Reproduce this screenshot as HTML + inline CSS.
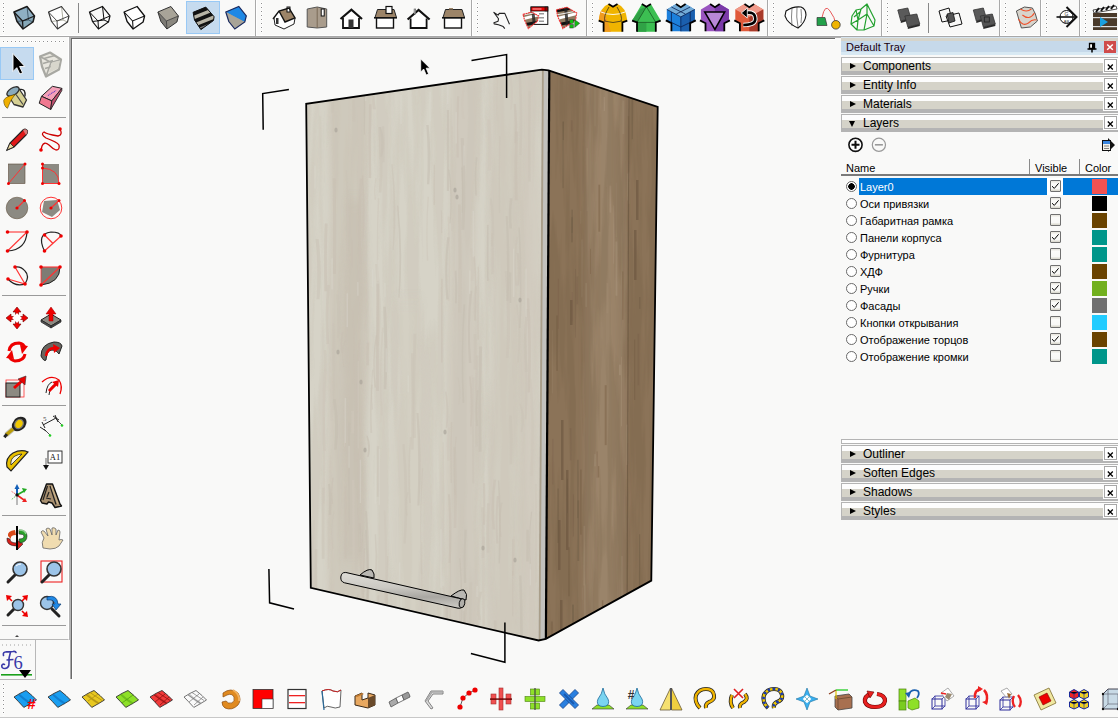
<!DOCTYPE html>
<html><head><meta charset="utf-8">
<style>
*{margin:0;padding:0;box-sizing:border-box}
html,body{width:1118px;height:718px;overflow:hidden;background:#f9f9f8;font-family:"Liberation Sans",sans-serif;position:relative}
.a{position:absolute}
.vsep{position:absolute;top:0;height:36px;width:1px;background:#a9a9a9;box-shadow:1px 0 0 #fff}
.grip{position:absolute;width:3px;background-image:radial-gradient(circle at 1.5px 1.5px,#8f8f8f 0.75px,rgba(255,255,255,0.9) 1px,transparent 1.6px);background-size:4px 4px}
.panel{position:absolute;left:841px;width:277px;height:18px;border-top:1px solid #b4b4b4;border-left:1px solid #b4b4b4;background:linear-gradient(#fdfdfd 0 5px,#d5d3c9 5px 13px,#b4b4b4 13px 17px,#f9f9f8 17px)}
.panel .t{position:absolute;left:21px;top:1px;font-size:12px;color:#000;line-height:14px}
.panel .tri{position:absolute;left:8px;top:5px;width:0;height:0;border-left:6px solid #000;border-top:3.5px solid transparent;border-bottom:3.5px solid transparent}
.panel .x{position:absolute;left:262px;top:1px;width:13px;height:13px;border:1px solid #a8a8a8;background:#fff}
.row{position:absolute;left:841px;width:277px;height:17px;font-size:11px}
.row .n{position:absolute;left:19px;top:3px;line-height:13px}
.rad{position:absolute;left:5px;top:3px;width:11px;height:11px;border-radius:50%;border:1px solid #6a6a6a;background:#fff}
.cb{position:absolute;left:209px;top:2px;width:11px;height:12px;border:1px solid #707070;border-radius:1px;background:linear-gradient(#e6e4dc,#fbfbf9 25%,#f8f8f6 75%,#d6d4c8)}
.sw{position:absolute;left:251px;top:1px;width:15px;height:15px}
</style></head><body>
<!-- top toolbar -->
<div class="a" style="left:0;top:35px;width:1118px;height:1px;background:#fff"></div>
<div class="a" style="left:0;top:36px;width:1118px;height:1px;background:#a8a8a8"></div>
<div class="grip" style="left:2px;top:2px;height:33px"></div>
<div class="vsep" style="left:255px"></div><div class="grip" style="left:260px;top:2px;height:33px"></div>
<div class="vsep" style="left:471px"></div><div class="grip" style="left:476px;top:2px;height:33px"></div>
<div class="vsep" style="left:586px"></div><div class="grip" style="left:591px;top:2px;height:33px"></div>
<div class="vsep" style="left:767px"></div><div class="grip" style="left:772px;top:2px;height:33px"></div>
<div class="vsep" style="left:881px"></div><div class="grip" style="left:886px;top:2px;height:33px"></div>
<div class="vsep" style="left:999px"></div><div class="grip" style="left:1004px;top:2px;height:33px"></div>
<div class="vsep" style="left:1040px"></div><div class="grip" style="left:1045px;top:2px;height:33px"></div>
<div class="vsep" style="left:1079px"></div><div class="grip" style="left:1084px;top:2px;height:33px"></div>
<div class="a" style="left:78px;top:3px;width:1px;height:30px;background:#888"></div>
<div class="a" style="left:928px;top:3px;width:1px;height:30px;background:#888"></div>
<!-- highlight top -->
<div class="a" style="left:186px;top:1px;width:34px;height:33px;background:#c6dbef;border:1px solid #99c9f5"></div>

<!--TOP--><svg class="a" style="left:0;top:0" width="1118" height="40"><g transform="translate(24.5,17)"><polygon points="-10.5,-5 2.5,-10.5 10,-1 -2,4" fill="#8fb0c4"/><polygon points="-10.5,-5 -2,4 -1.5,12 -7.5,4.5" fill="#7f9aab"/><polygon points="-2,4 10,-1 8.5,5 -1.5,12" fill="#86a8b8"/><polyline points="-7.5,4.5 4,3 8.5,5" fill="none" stroke="#3d5666" stroke-width="0.9"/><line x1="2.5" y1="-10.5" x2="4" y2="3" stroke="#3d5666" stroke-width="0.9"/><polygon points="-10.5,-5 2.5,-10.5 10,-1 8.5,5 -1.5,12 -7.5,4.5" fill="none" stroke="#1a1a1a" stroke-width="1.5" stroke-linejoin="round"/><polyline points="-10.5,-5 -2,4 10,-1" fill="none" stroke="#1a1a1a" stroke-width="1.2000000000000002"/><line x1="-2" y1="4" x2="-1.5" y2="12" stroke="#1a1a1a" stroke-width="1.2000000000000002"/></g><g transform="translate(59,17)"><polygon points="-10.5,-5 2.5,-10.5 10,-1 -2,4" fill="#fff"/><polygon points="-10.5,-5 -2,4 -1.5,12 -7.5,4.5" fill="#fff"/><polygon points="-2,4 10,-1 8.5,5 -1.5,12" fill="#fff"/><polyline points="-7.5,4.5 4,3 8.5,5" fill="none" stroke="#9a9a8a" stroke-width="0.8"/><line x1="2.5" y1="-10.5" x2="4" y2="3" stroke="#9a9a8a" stroke-width="0.8"/><polygon points="-10.5,-5 2.5,-10.5 10,-1 8.5,5 -1.5,12 -7.5,4.5" fill="none" stroke="#333" stroke-width="1.1" stroke-linejoin="round"/><polyline points="-10.5,-5 -2,4 10,-1" fill="none" stroke="#333" stroke-width="0.8800000000000001"/><line x1="-2" y1="4" x2="-1.5" y2="12" stroke="#333" stroke-width="0.8800000000000001"/></g><g transform="translate(100,17)"><polygon points="-10.5,-5 2.5,-10.5 10,-1 8.5,5 -1.5,12 -7.5,4.5" fill="none" stroke="#111" stroke-width="1.2"/><polyline points="-10.5,-5 -2,4 10,-1" fill="none" stroke="#111" stroke-width="1"/><line x1="-2" y1="4" x2="-1.5" y2="12" stroke="#111" stroke-width="1"/><polyline points="-7.5,4.5 4,3 8.5,5" fill="none" stroke="#111" stroke-width="1"/><line x1="2.5" y1="-10.5" x2="4" y2="3" stroke="#111" stroke-width="1"/></g><g transform="translate(134.6,17)"><polygon points="-10.5,-5 2.5,-10.5 10,-1 -2,4" fill="#fff"/><polygon points="-10.5,-5 -2,4 -1.5,12 -7.5,4.5" fill="#fff"/><polygon points="-2,4 10,-1 8.5,5 -1.5,12" fill="#fff"/><polygon points="-10.5,-5 2.5,-10.5 10,-1 8.5,5 -1.5,12 -7.5,4.5" fill="none" stroke="#111" stroke-width="1.3" stroke-linejoin="round"/><polyline points="-10.5,-5 -2,4 10,-1" fill="none" stroke="#111" stroke-width="1.04"/><line x1="-2" y1="4" x2="-1.5" y2="12" stroke="#111" stroke-width="1.04"/></g><g transform="translate(168.4,17)"><polygon points="-10.5,-5 2.5,-10.5 10,-1 -2,4" fill="#a8a498"/><polygon points="-10.5,-5 -2,4 -1.5,12 -7.5,4.5" fill="#7c7a74"/><polygon points="-2,4 10,-1 8.5,5 -1.5,12" fill="#8a877f"/><polygon points="-10.5,-5 2.5,-10.5 10,-1 8.5,5 -1.5,12 -7.5,4.5" fill="none" stroke="#333" stroke-width="1" stroke-linejoin="round"/><polyline points="-10.5,-5 -2,4 10,-1" fill="none" stroke="#333" stroke-width="0.8"/><line x1="-2" y1="4" x2="-1.5" y2="12" stroke="#333" stroke-width="0.8"/></g><g transform="translate(203,17)"><clipPath id="c6"><polygon points="-9.9,-4.7 2.8,-9.9 11.1,-0.3 10.5,3.5 -2.1,12.6 -8.5,3"/></clipPath><g clip-path="url(#c6)"><rect x="-15" y="-15" width="30" height="30" fill="#111"/><g transform="rotate(-22)"><rect x="-15" y="-4.6" width="30" height="3.4" fill="#b8b4a6"/><rect x="-15" y="2.4" width="30" height="3.4" fill="#b8b4a6"/><rect x="-15" y="8.4" width="30" height="1.4" fill="#777"/></g></g><polygon points="-9.9,-4.7 2.8,-9.9 11.1,-0.3 10.5,3.5 -2.1,12.6 -8.5,3" fill="none" stroke="#111" stroke-width="1"/></g><g transform="translate(236.3,17)"><polygon points="-10.5,-5 2.5,-10.5 10,-1 8.5,5 -1.5,12 -7.5,4.5" fill="#9b968a"/><polygon points="-10.5,-5 2.5,-10.5 10,-1 8.5,5" fill="#1e88e5"/><polygon points="-10.5,-5 8.5,5 -1.5,12 -7.5,4.5" fill="#a8a498"/><polygon points="-10.5,-5 2.5,-10.5 10,-1 8.5,5 -1.5,12 -7.5,4.5" fill="none" stroke="#1a2a60" stroke-width="1.2"/></g><g transform="translate(283,17)"><polygon points="-4,-6 6,-9 12,1 2,5" fill="#9c8468"/><polygon points="-9,1 -4,-6 2,5 1,12 -8,8" fill="#fff"/><polygon points="2,5 12,1 11,7 1,12" fill="#fff"/><rect x="-7" y="1" width="2.5" height="6" fill="#333"/><rect x="4" y="-10" width="3" height="5" fill="#fff" stroke="#111" stroke-width="1"/><polyline points="-10,2 -4,-6 6,-9 12,1 2,5 -4,-6" fill="none" stroke="#111" stroke-width="1.4"/><polyline points="-9,1 -8,8 1,12 11,7 12,1" fill="none" stroke="#222" stroke-width="1"/></g><g transform="translate(316.7,17)"><polygon points="-9.5,-8 0.5,-10 10,-8 10,10 0.5,11 -9.5,10" fill="#a99c8c" stroke="#555" stroke-width="1"/><line x1="0.5" y1="-10" x2="0.5" y2="11" stroke="#7a6a58" stroke-width="1"/><rect x="4.5" y="-8" width="3" height="7" fill="#fff" stroke="#111" stroke-width="1"/></g><g transform="translate(351,17)"><polygon points="-8,1 0.4,-7 8.5,1 8,11 -8,11" fill="#fff"/><polyline points="-10.5,2 0.4,-7.3 11,2" fill="none" stroke="#111" stroke-width="2.2"/><polyline points="-8,1 -8,11 8,11 8,1" fill="none" stroke="#111" stroke-width="1.8"/><rect x="-2.5" y="2.5" width="5" height="8.5" fill="#333"/></g><g transform="translate(385,17)"><polygon points="-10,0.5 -7.5,-7.5 9,-7.5 11.5,0.5" fill="#9c8468" stroke="#222" stroke-width="1"/><rect x="-11" y="0" width="23" height="1.6" fill="#111"/><rect x="-8.5" y="1" width="17" height="10" fill="#fff" stroke="#111" stroke-width="1.4"/><rect x="1" y="-10.5" width="6" height="7" fill="#fff" stroke="#111" stroke-width="1.2"/></g><g transform="translate(418.6,17)"><polygon points="-9,2 0,-6.5 9,2 9,11 -9,11" fill="#fff"/><polyline points="-11,2.5 0,-7 11,2.5" fill="none" stroke="#111" stroke-width="2.2"/><polyline points="-8,1.5 -8,11 8,11 8,1.5" fill="none" stroke="#111" stroke-width="1.8"/><rect x="-4.5" y="-8" width="1.6" height="5" fill="#ccc" stroke="#555" stroke-width="0.6"/></g><g transform="translate(453,17)"><polygon points="-10,0.5 -7.5,-7.5 9,-7.5 11.5,0.5" fill="#9c8468" stroke="#222" stroke-width="1"/><rect x="-11" y="0" width="23" height="1.6" fill="#111"/><rect x="-8.5" y="1" width="17" height="10" fill="#fff" stroke="#111" stroke-width="1.4"/><rect x="-4" y="-9" width="4" height="1.5" fill="#9c8468"/></g><g transform="translate(501,17)"><path d="M8.5,7.3 L3.8,-3.6 L-1.7,-3.6 L-2.9,-1.9 L-7.1,-4.6 L-2.5,1.8 L-2.9,4.2 L-7.1,5.7 L-6.8,6.9 L-2.5,7.7 L2.2,9.6 L3.8,11.6" fill="none" stroke="#222" stroke-width="1.1" stroke-linejoin="round"/></g><g transform="translate(536,17)"><rect x="-5" y="-10" width="16.8" height="17.4" fill="#fff" stroke="#111" stroke-width="1"/><rect x="-5" y="-10" width="16.8" height="4" fill="#e00" stroke="#111" stroke-width="0.8"/><rect x="-3.5" y="-8.6" width="9" height="1.2" fill="#fff" opacity="0.6"/><rect x="9" y="-10" width="2.8" height="4" fill="#900" stroke="#111" stroke-width="0.6"/><rect x="3" y="-4" width="5" height="1.5" fill="#999"/><rect x="3" y="0" width="5" height="1.5" fill="#999"/><rect x="3" y="3.5" width="5" height="1.5" fill="#999"/><clipPath id="cA"><polygon points="-13,-2.6 -4.4,-5 2.7,-1.1 1.5,4 -7.7,11.6 -11.5,3"/></clipPath><g clip-path="url(#cA)"><polygon points="-13,-2.6 -4.4,-5 2.7,-1.1 1.5,4 -7.7,11.6 -11.5,3" fill="#8f7a60"/><path d="M-20,-6 L20,-14 L20,-11 L-20,-3 Z" fill="#111"/><path d="M-20,2 L20,-8 L20,-5 L-20,5 Z" fill="#fff"/><path d="M-20,8 L20,0 L20,3 L-20,11 Z" fill="#111"/><path d="M-6,-20 L-2,20 L1,20 L-3,-20 Z" fill="#222" opacity="0.8"/><path d="M-20,-1 L20,-9 L20,-8 L-20,0 Z" fill="#eee"/></g><polygon points="-13,-2.6 -4.4,-5 2.7,-1.1 1.5,4 -7.7,11.6 -11.5,3" fill="none" stroke="#f03030" stroke-width="1.1" stroke-dasharray="2 0.6"/></g><g transform="translate(569,17)"><clipPath id="cB"><polygon points="-12.6,-7.3 -2,-9.7 7.7,-4 6.5,3 -6.1,11.6 -11.5,-1"/></clipPath><g clip-path="url(#cB)"><polygon points="-12.6,-7.3 -2,-9.7 7.7,-4 6.5,3 -6.1,11.6 -11.5,-1" fill="#8f7a60"/><path d="M-20,-6 L20,-14 L20,-11 L-20,-3 Z" fill="#111"/><path d="M-20,2 L20,-8 L20,-5 L-20,5 Z" fill="#fff"/><path d="M-20,8 L20,0 L20,3 L-20,11 Z" fill="#111"/><path d="M-6,-20 L-2,20 L1,20 L-3,-20 Z" fill="#222" opacity="0.8"/><path d="M-20,-1 L20,-9 L20,-8 L-20,0 Z" fill="#eee"/></g><polygon points="-12.6,-7.3 -2,-9.7 7.7,-4 6.5,3 -6.1,11.6 -11.5,-1" fill="none" stroke="#f03030" stroke-width="1.1" stroke-dasharray="2 0.6"/><rect x="0.8" y="2.7" width="3.6" height="3.6" fill="#11c011" stroke="#333" stroke-width="0.5"/><rect x="0.8" y="7.4" width="3.6" height="3.6" fill="#11c011" stroke="#333" stroke-width="0.5"/><polygon points="5.7,2.7 10.7,6.3 5.7,10.4" fill="#11c011" stroke="#333" stroke-width="0.5"/></g><g transform="translate(613,17)"><path d="M-4.5,-13 L0,-10.3 L4.5,-13 Q13,-10 14.3,3.6 L9.4,5.4 L9.4,14.8 L-9.4,14.8 L-9.4,5.4 L-14.3,3.6 Q-13,-10 -4.5,-13 Z" fill="#f0b400"/><path d="M-14.3,3.6 Q-13,-5 -12,-6 L-9,-6 L-2,14.8 L-9.4,14.8 L-9.4,5.4 Z" fill="#f09b1e"/><path d="M-12,-5 Q0,0 12,-5" fill="none" stroke="#fff" stroke-width="0.9"/><path d="M-9,4 Q0,7 9,4 M-4,-10 Q-10,0 -8,4 M4,-10 Q10,0 8,4" fill="none" stroke="#222" stroke-width="0.7"/><path d="M-4.5,-13 L0,-10.3 L4.5,-13 M9.4,14.8 L9.4,5.4 L14.3,3.6 M-9.4,14.8 L-9.4,5.4 L-14.3,3.6" fill="none" stroke="#000" stroke-width="1.8"/></g><g transform="translate(646.4,17)"><path d="M-4.5,-13 L0,-10.3 L4.5,-13 L14.3,3.6 L9.4,5.4 L9.4,14.8 L-9.4,14.8 L-9.4,5.4 L-14.3,3.6 Z" fill="#3cbf52"/><polygon points="-14.3,3.6 -6,-8 0,-10 -9.4,5.4" fill="#2fa045"/><polygon points="-9.4,5.4 0,5.4 0,14.8 -9.4,14.8" fill="#30a346"/><path d="M0,-10.3 L-9.4,5.4 L9.4,5.4 Z" fill="none" stroke="#1a5a25" stroke-width="0.8"/><path d="M-4.5,-13 L0,-10.3 L4.5,-13 M9.4,14.8 L9.4,5.4 L14.3,3.6 M-9.4,14.8 L-9.4,5.4 L-14.3,3.6" fill="none" stroke="#000" stroke-width="1.8"/></g><g transform="translate(680.8,17)"><path d="M-4.8,-12.9 L0,-9.8 L4.8,-12.9 L14,-7.6 L14,3.2 L15,3.6 L9.4,6.2 L9.4,14.3 L-9.4,14.3 L-9.4,6.2 L-15,3.6 L-14,3.2 L-14,-7.6 Z" fill="#1c80dc"/><polygon points="-14,-7.6 -4.8,-12.9 0,-9.8 4.8,-12.9 14,-7.6 0,-0.1" fill="#73acd8"/><polygon points="0,-0.1 14,-7.6 14,3.2 15,3.6 9.4,6.2 9.4,14.3 0,14.3" fill="#1a5fae"/><path d="M-14,-7.6 L0,-0.1 L14,-7.6 M0,-0.1 L0,14.3 M-9.4,-10 L4.5,-3 M9.4,-10 L-4.5,-3 M-9.4,-5 L-9.4,6 M9.4,-5 L9.4,6 M-14,3.2 L0,10 L14,3.2" fill="none" stroke="#0a2050" stroke-width="0.8"/><path d="M-4.8,-12.9 L0,-9.8 L4.8,-12.9 M9.4,14.3 L9.4,6.2 L15,3.4 M-9.4,14.3 L-9.4,6.2 L-15,3.4" fill="none" stroke="#000" stroke-width="1.8"/></g><g transform="translate(714.9,17)"><path d="M-4.8,-12.9 L0,-9.8 L4.8,-12.9 L14,-7.6 L14,3.2 L15,3.6 L9.4,6.2 L9.4,14.3 L-9.4,14.3 L-9.4,6.2 L-15,3.6 L-14,3.2 L-14,-7.6 Z" fill="#9a55c0"/><polygon points="0,-9.8 4.8,-12.9 14,-7.6 14,3.2 15,3.6 9.4,6.2 9.4,14.3 0,14.3" fill="#7a3aa8"/><polygon points="-10.2,-5.1 9.8,-5.1 0,12.4" fill="#b888d8" stroke="#000" stroke-width="1.5"/><path d="M-4.8,-12.9 L0,-9.8 L4.8,-12.9 M9.4,14.3 L9.4,6.2 L15,3.4 M-9.4,14.3 L-9.4,6.2 L-15,3.4" fill="none" stroke="#000" stroke-width="1.8"/></g><g transform="translate(749.3,17)"><path d="M-4.8,-12.9 L0,-9.8 L4.8,-12.9 L14,-7.6 L14,3.2 L15,3.6 L9.4,6.2 L9.4,14.3 L-9.4,14.3 L-9.4,6.2 L-15,3.6 L-14,3.2 L-14,-7.6 Z" fill="#e05a3a"/><polygon points="-14,-7.6 -4.8,-12.9 0,-9.8 4.8,-12.9 14,-7.6 0,-0.1" fill="#f09a8a"/><polygon points="0,-0.1 14,-7.6 14,3.2 15,3.6 9.4,6.2 9.4,14.3 0,14.3" fill="#a83a2a"/><path d="M-4,-4 Q6,-6 6,2 Q6,8 -6,8" fill="none" stroke="#fff" stroke-width="4.5"/><path d="M-4,-4 Q6,-6 6,2 Q6,8 -6,8" fill="none" stroke="#000" stroke-width="2.6"/><polygon points="-8,-4 -2,-9 -2,1" fill="#000" stroke="#fff" stroke-width="0.8"/><path d="M-4.8,-12.9 L0,-9.8 L4.8,-12.9 M9.4,14.3 L9.4,6.2 L15,3.4 M-9.4,14.3 L-9.4,6.2 L-15,3.4" fill="none" stroke="#000" stroke-width="1.8"/></g><g transform="translate(795,17)"><path d="M-9,-6 Q-2,-11 6,-10 Q11,-8 11,-2 Q10,6 3,11 Q-4,8 -8,3 L-10,-1 Z" fill="#fff" stroke="#111" stroke-width="1.1"/><path d="M-3,-9 Q-4,0 -3,9 M2,-10 Q1,0 3,10 M6,-8 Q7,0 6,6" fill="none" stroke="#333" stroke-width="0.6"/></g><g transform="translate(826,17)"><path d="M-4,0.5 Q-1,-14 4,-6 Q9,1 9.5,6" fill="none" stroke="#e85a5a" stroke-width="1"/><polygon points="-9,0.5 -1,0.5 1,8.5 -9,8.5" fill="#22a04a" stroke="#333" stroke-width="0.7"/><circle cx="9.9" cy="7.8" r="4.3" fill="#f0b400" stroke="#333" stroke-width="0.8"/></g><g transform="translate(863,17)"><path d="M-11,-1 L-7,-7 L-2,-8 L4,-13 L12,3 L11,9 L1,13 L-6,13 L-12,7 Z M-7,-7 L-5,3 L-12,7 M-5,3 L4,-3 L11,9 M4,-3 L4,-13 M-2,-8 L-5,3 M-6,13 L-5,3 M1,13 L4,-3 M-9,0 L-3,-5" fill="none" stroke="#22a02e" stroke-width="1.2" stroke-linejoin="round"/></g><g transform="translate(908.8,17)"><polygon points="-11,-7 -1,-9 2,1 -8,4" fill="#5a5a5a" stroke="#333" stroke-width="0.8"/><polygon points="-8,4 2,1 2,3 -8,6" fill="#2a2a2a"/><polygon points="-4,-1 8,-3 11,7 -1,10" fill="#555" stroke="#333" stroke-width="0.8"/><polygon points="-1,10 11,7 11,9 -1,12" fill="#2a2a2a"/></g><g transform="translate(951,17)"><polygon points="-12,-6 -2,-9 1,3 -9,5" fill="none" stroke="#111" stroke-width="1"/><polygon points="-5,-1 8,-4 11,7 -1,10" fill="none" stroke="#111" stroke-width="1"/><polygon points="-4,-3 2,-4.5 4,4 -2,6" fill="#555" stroke="#111" stroke-width="0.8"/></g><g transform="translate(984.3,17)"><polygon points="-11,-7 -1,-9 2,1 -8,4" fill="#5a5a5a" stroke="#333" stroke-width="0.8"/><polygon points="-8,4 2,1 2,3 -8,6" fill="#2a2a2a"/><polygon points="-4,-1 8,-3 11,7 -1,10" fill="#555" stroke="#333" stroke-width="0.8"/><polygon points="-1,10 11,7 11,9 -1,12" fill="#2a2a2a"/><rect x="0" y="0" width="5" height="5" fill="none" stroke="#222" stroke-width="0.8"/></g><g transform="translate(1026.4,17)"><path d="M-10,-6 L-2,-10 L6,-9 L9,-3 L11,4 L4,10 L-5,11 Z" fill="#d8d4cc" stroke="#444" stroke-width="0.9"/><path d="M-6,-8 Q0,-4 5,-8 M-8,2 Q-4,10 2,6 Q6,2 10,3 M-4,-2 Q3,4 8,-4" fill="none" stroke="#f0502a" stroke-width="1.1"/></g><g transform="translate(1066.5,17)"><circle cx="0" cy="0" r="6.5" fill="#fff" stroke="#111" stroke-width="1"/><line x1="-10" y1="0" x2="10" y2="0" stroke="#111" stroke-width="1.6"/><polyline points="0,-10 10,0 0,10" fill="none" stroke="#111" stroke-width="2"/><text x="0" y="-1.5" font-size="5" text-anchor="middle" fill="#333" font-family="Liberation Sans">G</text><text x="0" y="6" font-size="4" text-anchor="middle" fill="#333" font-family="Liberation Sans">AB</text></g><g transform="translate(1105,17)"><polygon points="-12,-7 11,-11 12,-8 -11,-4" fill="#fff" stroke="#222" stroke-width="0.8"/><path d="M-9,-5 L-6,-9 M-4,-6 L-1,-10 M1,-7 L4,-11 M6,-8 L9,-12" stroke="#111" stroke-width="2"/><rect x="-12" y="-4" width="24" height="17" fill="#4a3a2a"/><rect x="-12" y="0" width="24" height="1.2" fill="#ddd"/><rect x="-12" y="9" width="24" height="1.2" fill="#ddd"/><polygon points="-5,0 3,5 -5,10" fill="#1aa0e0"/></g></svg><!--/TOP-->
<!-- viewport border -->
<div class="a" style="left:69px;top:37px;width:772px;height:603px;border-left:2px solid #b4b4b4;border-top:1px solid #b0b0b0"></div><div class="a" style="left:70px;top:640px;width:1px;height:39px;background:#a8a8a8"></div>
<div class="a" style="left:71px;top:38px;width:764px;height:641px;border-left:1px solid #6a6a6a;border-top:1px solid #6a6a6a"></div><div class="a" style="left:72px;top:39px;width:763px;height:640px;border-left:1px solid #fff;border-top:1px solid #fff"></div>

<!--CAB--><svg class="a" style="left:0;top:0" width="1118" height="718" viewBox="0 0 1118 718">
<defs>
<clipPath id="cf"><polygon points="306.2,103.8 541.9,69.6 538.6,640.5 310.8,587.9"/></clipPath>
<clipPath id="cs"><polygon points="550.0,70.5 657.7,106.9 651.3,580.6 545.9,638.9"/></clipPath>
<filter id="bl" x="-50%" y="-5%" width="200%" height="110%"><feGaussianBlur stdDeviation="2.5 6"/></filter>
<linearGradient id="hg" x1="0" y1="0" x2="0.1" y2="1"><stop offset="0" stop-color="#dedcd6"/><stop offset="0.45" stop-color="#cbc9c3"/><stop offset="0.75" stop-color="#a9a7a2"/><stop offset="1" stop-color="#c5c3bd"/></linearGradient>
<filter id="grainF" x="0" y="0" width="100%" height="100%" color-interpolation-filters="sRGB"><feTurbulence type="fractalNoise" baseFrequency="0.09 0.006" numOctaves="3" seed="4"/><feColorMatrix type="matrix" values="0 0 0 0 0.74  0 0 0 0 0.70  0 0 0 0 0.63  0 0 0 -5 3.0"/><feComponentTransfer><feFuncA type="linear" slope="0.9"/></feComponentTransfer></filter>
<filter id="grainS" x="0" y="0" width="100%" height="100%" color-interpolation-filters="sRGB"><feTurbulence type="fractalNoise" baseFrequency="0.12 0.008" numOctaves="3" seed="9"/><feColorMatrix type="matrix" values="0 0 0 0 0.42  0 0 0 0 0.34  0 0 0 0 0.24  0 0 0 -5 3.0"/><feComponentTransfer><feFuncA type="linear" slope="0.7"/></feComponentTransfer></filter>
</defs>
<polygon points="306.2,103.8 541.9,69.6 538.6,640.5 310.8,587.9" fill="#d6d3c7"/>
<g clip-path="url(#cf)">
<rect x="300" y="60" width="250" height="590" filter="url(#grainF)" opacity="0.22"/>
<polygon points="327.7,60.0 328.4,133.8 330.5,207.5 327.8,281.2 328.0,355.0 328.5,428.8 326.1,502.5 328.1,576.2 328.8,650.0 369.8,650.0 365.6,576.2 366.8,502.5 365.5,428.8 369.9,355.0 369.2,281.2 365.3,207.5 370.9,133.8 370.8,60.0" fill="#c9c1b3" opacity="0.55" filter="url(#bl)"/>
<polygon points="345.9,200.0 345.7,245.0 342.9,290.0 342.1,335.0 345.2,380.0 342.4,425.0 343.1,470.0 343.5,515.0 342.2,560.0 362.8,560.0 362.6,515.0 365.1,470.0 363.1,425.0 363.8,380.0 363.0,335.0 364.0,290.0 362.7,245.0 361.7,200.0" fill="#c4bbad" opacity="0.45" filter="url(#bl)"/>
<polygon points="451.0,60.0 451.0,133.8 450.0,207.5 449.2,281.2 446.9,355.0 446.4,428.8 446.7,502.5 445.4,576.2 449.6,650.0 477.4,650.0 480.1,576.2 477.3,502.5 480.7,428.8 480.1,355.0 475.0,281.2 476.3,207.5 480.5,133.8 477.8,60.0" fill="#cac2b5" opacity="0.5" filter="url(#bl)"/>
<polygon points="492.9,60.0 489.4,133.8 487.4,207.5 490.8,281.2 491.7,355.0 488.6,428.8 487.5,502.5 489.0,576.2 492.8,650.0 531.5,650.0 527.7,576.2 528.5,502.5 527.6,428.8 527.4,355.0 531.8,281.2 528.1,207.5 530.4,133.8 529.7,60.0" fill="#ccc5b8" opacity="0.45" filter="url(#bl)"/>
<polygon points="518.1,60.0 521.4,133.8 517.8,207.5 520.9,281.2 517.7,355.0 519.5,428.8 518.3,502.5 518.6,576.2 522.8,650.0 541.8,650.0 538.8,576.2 542.3,502.5 538.3,428.8 539.4,355.0 542.1,281.2 540.9,207.5 537.6,133.8 542.9,60.0" fill="#cfc8bb" opacity="0.5" filter="url(#bl)"/>
<polygon points="393.3,300.0 393.5,343.8 396.6,387.5 394.0,431.2 393.8,475.0 392.4,518.8 392.5,562.5 395.5,606.2 393.5,650.0 425.6,650.0 424.2,606.2 424.7,562.5 427.8,518.8 424.9,475.0 425.4,431.2 427.2,387.5 423.1,343.8 422.9,300.0" fill="#d0cabe" opacity="0.35" filter="url(#bl)"/>
<path d="M374.7,534.3 q1.5,21.2 0.4,42.5 l1.4,0 q1.5,-21.2 -0.4,-42.5z" fill="#cac3b6" opacity="0.55"/>
<path d="M344.5,339.9 q-3.7,13.5 -1.1,27.1 l1.1,0 q-3.7,-13.5 1.1,-27.1z" fill="#c8c0b3" opacity="0.55"/>
<path d="M377.8,198.3 q-1.7,41.7 -0.5,83.4 l1.5,0 q-1.7,-41.7 0.5,-83.4z" fill="#cec7ba" opacity="0.55"/>
<path d="M332.2,477.8 q-1.8,13.1 -0.5,26.2 l1.5,0 q-1.8,-13.1 0.5,-26.2z" fill="#c8c0b3" opacity="0.55"/>
<path d="M375.2,178.3 q-2.0,10.7 -0.6,21.5 l1.5,0 q-2.0,-10.7 0.6,-21.5z" fill="#cec7ba" opacity="0.55"/>
<path d="M324.7,223.5 q-1.1,33.9 -0.3,67.8 l2.9,0 q-1.1,-33.9 0.3,-67.8z" fill="#c8c0b3" opacity="0.55"/>
<path d="M373.7,628.7 q0.7,39.6 0.2,79.1 l2.4,0 q0.7,-39.6 -0.2,-79.1z" fill="#cac3b6" opacity="0.55"/>
<path d="M375.6,335.4 q-3.8,26.1 -1.1,52.2 l1.6,0 q-3.8,-26.1 1.1,-52.2z" fill="#c8c0b3" opacity="0.55"/>
<path d="M358.9,339.7 q-3.4,42.9 -1.0,85.7 l1.6,0 q-3.4,-42.9 1.0,-85.7z" fill="#c8c0b3" opacity="0.55"/>
<path d="M353.7,487.5 q2.3,50.5 0.7,101.0 l2.5,0 q2.3,-50.5 -0.7,-101.0z" fill="#cac3b6" opacity="0.55"/>
<path d="M375.1,264.1 q3.6,40.8 1.1,81.7 l2.8,0 q3.6,-40.8 -1.1,-81.7z" fill="#cec7ba" opacity="0.55"/>
<path d="M323.8,350.0 q0.7,10.7 0.2,21.3 l2.3,0 q0.7,-10.7 -0.2,-21.3z" fill="#cec7ba" opacity="0.55"/>
<path d="M357.3,106.5 q1.8,38.8 0.5,77.5 l3.0,0 q1.8,-38.8 -0.5,-77.5z" fill="#cec7ba" opacity="0.55"/>
<path d="M344.5,486.3 q0.1,36.1 0.0,72.3 l1.9,0 q0.1,-36.1 -0.0,-72.3z" fill="#c8c0b3" opacity="0.55"/>
<path d="M351.8,239.9 q-0.0,13.9 -0.0,27.9 l1.0,0 q-0.0,-13.9 0.0,-27.9z" fill="#c8c0b3" opacity="0.55"/>
<path d="M357.6,593.9 q-2.9,21.5 -0.9,43.0 l1.0,0 q-2.9,-21.5 0.9,-43.0z" fill="#c5bdb0" opacity="0.55"/>
<path d="M357.5,360.7 q-0.0,43.9 -0.0,87.8 l1.7,0 q-0.0,-43.9 0.0,-87.8z" fill="#cec7ba" opacity="0.55"/>
<path d="M336.0,294.8 q3.0,21.3 0.9,42.6 l2.3,0 q3.0,-21.3 -0.9,-42.6z" fill="#cac3b6" opacity="0.55"/>
<path d="M344.3,398.2 q-1.2,24.2 -0.4,48.5 l1.3,0 q-1.2,-24.2 0.4,-48.5z" fill="#cec7ba" opacity="0.55"/>
<path d="M373.9,83.5 q-3.1,12.9 -0.9,25.8 l3.0,0 q-3.1,-12.9 0.9,-25.8z" fill="#cac3b6" opacity="0.55"/>
<path d="M349.3,596.9 q1.4,47.4 0.4,94.8 l1.8,0 q1.4,-47.4 -0.4,-94.8z" fill="#cec7ba" opacity="0.55"/>
<path d="M363.5,548.3 q-1.8,38.1 -0.5,76.2 l1.6,0 q-1.8,-38.1 0.5,-76.2z" fill="#c8c0b3" opacity="0.55"/>
<path d="M357.2,453.4 q1.1,22.6 0.3,45.3 l1.7,0 q1.1,-22.6 -0.3,-45.3z" fill="#c8c0b3" opacity="0.55"/>
<path d="M345.5,170.2 q2.4,44.6 0.7,89.2 l1.5,0 q2.4,-44.6 -0.7,-89.2z" fill="#cac3b6" opacity="0.55"/>
<path d="M379.1,126.9 q3.7,14.9 1.1,29.8 l2.1,0 q3.7,-14.9 -1.1,-29.8z" fill="#c5bdb0" opacity="0.55"/>
<path d="M361.7,175.6 q2.0,31.4 0.6,62.8 l1.4,0 q2.0,-31.4 -0.6,-62.8z" fill="#c8c0b3" opacity="0.55"/>
<path d="M353.0,81.0 q-0.9,20.2 -0.3,40.4 l2.6,0 q-0.9,-20.2 0.3,-40.4z" fill="#cac3b6" opacity="0.55"/>
<path d="M367.9,585.6 q-3.0,13.9 -0.9,27.8 l2.9,0 q-3.0,-13.9 0.9,-27.8z" fill="#cec7ba" opacity="0.55"/>
<path d="M348.3,422.8 q-0.3,50.9 -0.1,101.9 l1.8,0 q-0.3,-50.9 0.1,-101.9z" fill="#c5bdb0" opacity="0.55"/>
<path d="M359.8,178.8 q-2.3,42.5 -0.7,85.0 l2.6,0 q-2.3,-42.5 0.7,-85.0z" fill="#c8c0b3" opacity="0.55"/>
<path d="M374.2,628.7 q-1.9,54.0 -0.6,108.0 l2.1,0 q-1.9,-54.0 0.6,-108.0z" fill="#c5bdb0" opacity="0.55"/>
<path d="M363.7,69.1 q0.4,32.7 0.1,65.4 l1.1,0 q0.4,-32.7 -0.1,-65.4z" fill="#c5bdb0" opacity="0.55"/>
<path d="M366.6,342.7 q-0.6,11.3 -0.2,22.6 l2.6,0 q-0.6,-11.3 0.2,-22.6z" fill="#c8c0b3" opacity="0.55"/>
<path d="M324.0,369.2 q-2.8,40.9 -0.8,81.8 l2.8,0 q-2.8,-40.9 0.8,-81.8z" fill="#cec7ba" opacity="0.55"/>
<path d="M352.0,479.7 q0.6,47.8 0.2,95.6 l2.4,0 q0.6,-47.8 -0.2,-95.6z" fill="#cec7ba" opacity="0.55"/>
<path d="M362.0,499.5 q0.2,29.8 0.1,59.5 l2.1,0 q0.2,-29.8 -0.1,-59.5z" fill="#cac3b6" opacity="0.55"/>
<path d="M370.9,384.8 q-1.6,24.0 -0.5,48.1 l1.8,0 q-1.6,-24.0 0.5,-48.1z" fill="#cac3b6" opacity="0.55"/>
<path d="M330.2,375.9 q0.3,22.3 0.1,44.6 l2.0,0 q0.3,-22.3 -0.1,-44.6z" fill="#cec7ba" opacity="0.55"/>
<path d="M351.2,411.0 q0.4,11.2 0.1,22.5 l2.9,0 q0.4,-11.2 -0.1,-22.5z" fill="#cec7ba" opacity="0.55"/>
<path d="M379.4,130.7 q-0.7,14.2 -0.2,28.4 l1.3,0 q-0.7,-14.2 0.2,-28.4z" fill="#cec7ba" opacity="0.55"/>
<path d="M377.5,595.6 q-1.3,22.1 -0.4,44.2 l1.9,0 q-1.3,-22.1 0.4,-44.2z" fill="#cac3b6" opacity="0.55"/>
<path d="M374.3,602.7 q-2.5,51.4 -0.7,102.8 l2.0,0 q-2.5,-51.4 0.7,-102.8z" fill="#c8c0b3" opacity="0.55"/>
<path d="M357.8,596.7 q-3.7,15.8 -1.1,31.7 l2.6,0 q-3.7,-15.8 1.1,-31.7z" fill="#c8c0b3" opacity="0.55"/>
<path d="M331.0,66.9 q1.0,22.8 0.3,45.6 l2.4,0 q1.0,-22.8 -0.3,-45.6z" fill="#cac3b6" opacity="0.55"/>
<path d="M328.1,483.9 q1.7,15.5 0.5,31.1 l2.0,0 q1.7,-15.5 -0.5,-31.1z" fill="#c5bdb0" opacity="0.55"/>
<path d="M362.7,569.7 q0.3,11.0 0.1,22.1 l2.3,0 q0.3,-11.0 -0.1,-22.1z" fill="#cac3b6" opacity="0.55"/>
<path d="M372.1,369.7 q-2.1,19.8 -0.6,39.7 l1.4,0 q-2.1,-19.8 0.6,-39.7z" fill="#cac3b6" opacity="0.55"/>
<path d="M365.0,530.1 q3.1,50.6 0.9,101.2 l1.6,0 q3.1,-50.6 -0.9,-101.2z" fill="#c5bdb0" opacity="0.55"/>
<path d="M333.3,511.4 q-2.9,18.8 -0.9,37.5 l1.2,0 q-2.9,-18.8 0.9,-37.5z" fill="#cac3b6" opacity="0.55"/>
<path d="M327.1,285.0 q-2.4,29.6 -0.7,59.1 l2.9,0 q-2.4,-29.6 0.7,-59.1z" fill="#cac3b6" opacity="0.55"/>
<path d="M358.4,523.3 q3.3,14.3 1.0,28.6 l2.1,0 q3.3,-14.3 -1.0,-28.6z" fill="#c5bdb0" opacity="0.55"/>
<path d="M378.2,126.9 q2.4,32.8 0.7,65.5 l2.5,0 q2.4,-32.8 -0.7,-65.5z" fill="#cac3b6" opacity="0.55"/>
<path d="M350.0,74.1 q-2.8,44.3 -0.8,88.6 l2.2,0 q-2.8,-44.3 0.8,-88.6z" fill="#cec7ba" opacity="0.55"/>
<path d="M332.7,178.3 q0.6,47.8 0.2,95.6 l3.0,0 q0.6,-47.8 -0.2,-95.6z" fill="#c8c0b3" opacity="0.55"/>
<path d="M329.8,455.0 q-0.3,13.5 -0.1,27.0 l1.2,0 q-0.3,-13.5 0.1,-27.0z" fill="#cec7ba" opacity="0.55"/>
<path d="M351.9,309.4 q2.8,37.0 0.8,74.1 l1.0,0 q2.8,-37.0 -0.8,-74.1z" fill="#c8c0b3" opacity="0.55"/>
<path d="M332.5,323.3 q0.8,43.3 0.3,86.5 l1.8,0 q0.8,-43.3 -0.3,-86.5z" fill="#cac3b6" opacity="0.55"/>
<path d="M327.5,519.6 q0.6,24.6 0.2,49.1 l1.2,0 q0.6,-24.6 -0.2,-49.1z" fill="#cec7ba" opacity="0.55"/>
<path d="M333.1,399.1 q3.3,25.3 1.0,50.7 l2.5,0 q3.3,-25.3 -1.0,-50.7z" fill="#c5bdb0" opacity="0.55"/>
<path d="M365.2,511.2 q3.0,46.7 0.9,93.3 l1.8,0 q3.0,-46.7 -0.9,-93.3z" fill="#c5bdb0" opacity="0.55"/>
<path d="M362.3,505.0 q-3.4,44.4 -1.0,88.9 l1.8,0 q-3.4,-44.4 1.0,-88.9z" fill="#cac3b6" opacity="0.55"/>
<path d="M341.8,331.9 q-2.1,10.5 -0.6,21.0 l1.7,0 q-2.1,-10.5 0.6,-21.0z" fill="#c8c0b3" opacity="0.55"/>
<path d="M376.8,446.3 q0.3,25.2 0.1,50.4 l2.3,0 q0.3,-25.2 -0.1,-50.4z" fill="#cac3b6" opacity="0.55"/>
<path d="M344.6,639.9 q3.8,38.9 1.2,77.8 l2.4,0 q3.8,-38.9 -1.2,-77.8z" fill="#cec7ba" opacity="0.55"/>
<path d="M323.3,416.9 q0.0,43.2 0.0,86.5 l1.5,0 q0.0,-43.2 -0.0,-86.5z" fill="#cec7ba" opacity="0.55"/>
<path d="M366.2,435.8 q3.2,10.5 1.0,21.0 l1.5,0 q3.2,-10.5 -1.0,-21.0z" fill="#c5bdb0" opacity="0.55"/>
<path d="M353.9,354.5 q1.1,53.5 0.3,107.0 l2.1,0 q1.1,-53.5 -0.3,-107.0z" fill="#c8c0b3" opacity="0.55"/>
<path d="M369.0,104.2 q-0.9,36.9 -0.3,73.8 l2.5,0 q-0.9,-36.9 0.3,-73.8z" fill="#c8c0b3" opacity="0.55"/>
<path d="M376.4,283.8 q-0.6,53.7 -0.2,107.3 l2.7,0 q-0.6,-53.7 0.2,-107.3z" fill="#c8c0b3" opacity="0.55"/>
<path d="M487.0,225.0 q-0.1,27.9 -0.0,55.9 l1.6,0 q-0.1,-27.9 0.0,-55.9z" fill="#c5bdb0" opacity="0.55"/>
<path d="M465.6,599.1 q-3.9,39.9 -1.2,79.7 l2.5,0 q-3.9,-39.9 1.2,-79.7z" fill="#c8c0b3" opacity="0.55"/>
<path d="M463.3,84.8 q-3.6,17.0 -1.1,34.1 l2.5,0 q-3.6,-17.0 1.1,-34.1z" fill="#cec7ba" opacity="0.55"/>
<path d="M469.9,290.7 q-3.4,36.2 -1.0,72.4 l2.4,0 q-3.4,-36.2 1.0,-72.4z" fill="#c5bdb0" opacity="0.55"/>
<path d="M526.0,309.1 q-3.6,31.5 -1.1,63.0 l2.9,0 q-3.6,-31.5 1.1,-63.0z" fill="#cac3b6" opacity="0.55"/>
<path d="M449.4,529.9 q0.8,50.9 0.2,101.9 l1.3,0 q0.8,-50.9 -0.2,-101.9z" fill="#cac3b6" opacity="0.55"/>
<path d="M450.9,422.1 q-1.1,30.5 -0.3,61.0 l1.4,0 q-1.1,-30.5 0.3,-61.0z" fill="#c8c0b3" opacity="0.55"/>
<path d="M454.7,270.7 q1.1,16.3 0.3,32.6 l1.8,0 q1.1,-16.3 -0.3,-32.6z" fill="#c5bdb0" opacity="0.55"/>
<path d="M504.8,271.1 q3.6,43.5 1.1,86.9 l2.6,0 q3.6,-43.5 -1.1,-86.9z" fill="#cac3b6" opacity="0.55"/>
<path d="M509.8,198.3 q-1.8,15.1 -0.5,30.2 l2.8,0 q-1.8,-15.1 0.5,-30.2z" fill="#c5bdb0" opacity="0.55"/>
<path d="M497.9,480.5 q2.0,41.5 0.6,82.9 l1.4,0 q2.0,-41.5 -0.6,-82.9z" fill="#c5bdb0" opacity="0.55"/>
<path d="M458.0,204.4 q1.0,54.1 0.3,108.2 l2.8,0 q1.0,-54.1 -0.3,-108.2z" fill="#c8c0b3" opacity="0.55"/>
<path d="M440.9,210.5 q0.3,11.2 0.1,22.4 l1.1,0 q0.3,-11.2 -0.1,-22.4z" fill="#cac3b6" opacity="0.55"/>
<path d="M446.9,110.1 q-0.1,40.4 -0.0,80.9 l2.1,0 q-0.1,-40.4 0.0,-80.9z" fill="#c5bdb0" opacity="0.55"/>
<path d="M473.6,256.2 q2.4,32.2 0.7,64.5 l1.3,0 q2.4,-32.2 -0.7,-64.5z" fill="#c8c0b3" opacity="0.55"/>
<path d="M482.5,536.8 q-0.6,47.7 -0.2,95.4 l2.5,0 q-0.6,-47.7 0.2,-95.4z" fill="#cec7ba" opacity="0.55"/>
<path d="M464.5,529.7 q-1.7,26.6 -0.5,53.2 l2.3,0 q-1.7,-26.6 0.5,-53.2z" fill="#c5bdb0" opacity="0.55"/>
<path d="M512.1,539.2 q-0.3,18.3 -0.1,36.5 l2.3,0 q-0.3,-18.3 0.1,-36.5z" fill="#c8c0b3" opacity="0.55"/>
<path d="M470.8,375.3 q-1.6,29.4 -0.5,58.9 l2.1,0 q-1.6,-29.4 0.5,-58.9z" fill="#cec7ba" opacity="0.55"/>
<path d="M513.7,104.1 q1.6,19.6 0.5,39.2 l2.3,0 q1.6,-19.6 -0.5,-39.2z" fill="#c8c0b3" opacity="0.55"/>
<path d="M487.0,503.2 q-1.1,24.8 -0.3,49.5 l2.8,0 q-1.1,-24.8 0.3,-49.5z" fill="#cac3b6" opacity="0.55"/>
<path d="M509.0,272.5 q-0.5,15.3 -0.1,30.6 l2.4,0 q-0.5,-15.3 0.1,-30.6z" fill="#c5bdb0" opacity="0.55"/>
<path d="M516.3,236.8 q-3.3,24.3 -1.0,48.6 l1.8,0 q-3.3,-24.3 1.0,-48.6z" fill="#cac3b6" opacity="0.55"/>
<path d="M518.7,74.0 q1.9,40.5 0.6,80.9 l2.2,0 q1.9,-40.5 -0.6,-80.9z" fill="#cac3b6" opacity="0.55"/>
<path d="M475.0,286.3 q-2.6,17.0 -0.8,33.9 l2.2,0 q-2.6,-17.0 0.8,-33.9z" fill="#cac3b6" opacity="0.55"/>
<path d="M512.1,570.9 q0.4,22.7 0.1,45.3 l1.0,0 q0.4,-22.7 -0.1,-45.3z" fill="#c8c0b3" opacity="0.55"/>
<path d="M493.9,620.5 q0.7,39.3 0.2,78.6 l2.6,0 q0.7,-39.3 -0.2,-78.6z" fill="#c8c0b3" opacity="0.55"/>
<path d="M469.0,376.4 q3.2,25.1 1.0,50.1 l1.5,0 q3.2,-25.1 -1.0,-50.1z" fill="#c8c0b3" opacity="0.55"/>
<path d="M448.0,427.8 q-2.0,16.5 -0.6,32.9 l2.5,0 q-2.0,-16.5 0.6,-32.9z" fill="#cec7ba" opacity="0.55"/>
<path d="M460.9,503.9 q-1.2,33.5 -0.4,66.9 l2.5,0 q-1.2,-33.5 0.4,-66.9z" fill="#cec7ba" opacity="0.55"/>
<path d="M516.7,253.1 q1.7,16.2 0.5,32.3 l2.0,0 q1.7,-16.2 -0.5,-32.3z" fill="#c8c0b3" opacity="0.55"/>
<path d="M526.9,298.2 q2.4,47.2 0.7,94.4 l2.3,0 q2.4,-47.2 -0.7,-94.4z" fill="#c8c0b3" opacity="0.55"/>
<path d="M519.2,575.4 q1.7,53.1 0.5,106.2 l2.3,0 q1.7,-53.1 -0.5,-106.2z" fill="#c5bdb0" opacity="0.55"/>
<path d="M516.2,304.5 q3.9,28.9 1.2,57.8 l1.3,0 q3.9,-28.9 -1.2,-57.8z" fill="#cac3b6" opacity="0.55"/>
<path d="M475.7,157.2 q-1.8,19.2 -0.5,38.4 l1.8,0 q-1.8,-19.2 0.5,-38.4z" fill="#c5bdb0" opacity="0.55"/>
<path d="M524.2,333.4 q2.2,42.9 0.7,85.8 l1.6,0 q2.2,-42.9 -0.7,-85.8z" fill="#cac3b6" opacity="0.55"/>
<path d="M457.0,96.2 q-1.5,30.6 -0.4,61.3 l2.2,0 q-1.5,-30.6 0.4,-61.3z" fill="#c8c0b3" opacity="0.55"/>
<path d="M458.8,268.4 q0.8,36.5 0.2,73.0 l2.2,0 q0.8,-36.5 -0.2,-73.0z" fill="#cec7ba" opacity="0.55"/>
<path d="M461.3,167.3 q1.0,22.6 0.3,45.3 l1.3,0 q1.0,-22.6 -0.3,-45.3z" fill="#c5bdb0" opacity="0.55"/>
<path d="M529.5,379.2 q3.3,48.4 1.0,96.8 l2.0,0 q3.3,-48.4 -1.0,-96.8z" fill="#cec7ba" opacity="0.55"/>
<path d="M472.5,377.5 q-0.8,53.1 -0.2,106.1 l2.0,0 q-0.8,-53.1 0.2,-106.1z" fill="#cac3b6" opacity="0.55"/>
<path d="M460.7,137.9 q2.3,45.9 0.7,91.8 l3.0,0 q2.3,-45.9 -0.7,-91.8z" fill="#c5bdb0" opacity="0.55"/>
<path d="M445.5,596.1 q-0.4,50.1 -0.1,100.3 l2.7,0 q-0.4,-50.1 0.1,-100.3z" fill="#c5bdb0" opacity="0.55"/>
<path d="M463.4,304.4 q-2.8,49.4 -0.9,98.7 l1.8,0 q-2.8,-49.4 0.9,-98.7z" fill="#c5bdb0" opacity="0.55"/>
<path d="M526.3,529.8 q0.1,15.9 0.0,31.8 l2.5,0 q0.1,-15.9 -0.0,-31.8z" fill="#c5bdb0" opacity="0.55"/>
<path d="M445.0,391.7 q2.6,18.0 0.8,36.0 l1.4,0 q2.6,-18.0 -0.8,-36.0z" fill="#cac3b6" opacity="0.55"/>
<path d="M447.8,216.6 q1.5,42.2 0.5,84.5 l1.2,0 q1.5,-42.2 -0.5,-84.5z" fill="#cec7ba" opacity="0.55"/>
<path d="M447.9,494.2 q2.3,34.5 0.7,68.9 l2.0,0 q2.3,-34.5 -0.7,-68.9z" fill="#c8c0b3" opacity="0.55"/>
<path d="M479.6,591.7 q-3.7,14.1 -1.1,28.2 l2.7,0 q-3.7,-14.1 1.1,-28.2z" fill="#cac3b6" opacity="0.55"/>
<path d="M479.2,346.6 q-1.5,52.6 -0.5,105.2 l2.9,0 q-1.5,-52.6 0.5,-105.2z" fill="#c5bdb0" opacity="0.55"/>
<path d="M447.2,237.3 q-3.4,31.0 -1.0,62.1 l2.4,0 q-3.4,-31.0 1.0,-62.1z" fill="#c5bdb0" opacity="0.55"/>
<path d="M453.4,447.2 q1.2,40.4 0.4,80.8 l2.5,0 q1.2,-40.4 -0.4,-80.8z" fill="#c8c0b3" opacity="0.55"/>
<path d="M441.2,278.7 q-0.3,42.0 -0.1,83.9 l1.5,0 q-0.3,-42.0 0.1,-83.9z" fill="#c8c0b3" opacity="0.55"/>
<path d="M441.0,635.1 q-1.7,46.0 -0.5,92.0 l1.4,0 q-1.7,-46.0 0.5,-92.0z" fill="#cac3b6" opacity="0.55"/>
<path d="M475.7,373.1 q0.4,23.4 0.1,46.8 l1.7,0 q0.4,-23.4 -0.1,-46.8z" fill="#cec7ba" opacity="0.55"/>
<path d="M448.3,169.4 q3.6,26.9 1.1,53.9 l1.2,0 q3.6,-26.9 -1.1,-53.9z" fill="#c5bdb0" opacity="0.55"/>
<path d="M493.5,479.8 q-3.2,24.9 -1.0,49.8 l2.7,0 q-3.2,-24.9 1.0,-49.8z" fill="#c8c0b3" opacity="0.55"/>
<path d="M499.1,136.2 q-0.8,38.4 -0.2,76.7 l1.4,0 q-0.8,-38.4 0.2,-76.7z" fill="#cac3b6" opacity="0.55"/>
<path d="M519.5,403.8 q3.9,14.1 1.2,28.1 l1.5,0 q3.9,-14.1 -1.2,-28.1z" fill="#cac3b6" opacity="0.55"/>
<path d="M481.2,507.3 q1.2,25.4 0.4,50.7 l2.6,0 q1.2,-25.4 -0.4,-50.7z" fill="#cac3b6" opacity="0.55"/>
<path d="M512.9,536.2 q1.0,27.4 0.3,54.7 l1.7,0 q1.0,-27.4 -0.3,-54.7z" fill="#cec7ba" opacity="0.55"/>
<path d="M509.1,415.6 q1.3,24.3 0.4,48.6 l2.6,0 q1.3,-24.3 -0.4,-48.6z" fill="#cac3b6" opacity="0.55"/>
<path d="M497.8,70.8 q-3.1,24.9 -0.9,49.8 l1.7,0 q-3.1,-24.9 0.9,-49.8z" fill="#cec7ba" opacity="0.55"/>
<path d="M475.9,355.4 q-2.0,45.5 -0.6,91.0 l2.7,0 q-2.0,-45.5 0.6,-91.0z" fill="#cac3b6" opacity="0.55"/>
<path d="M491.2,233.1 q0.6,20.5 0.2,41.1 l2.2,0 q0.6,-20.5 -0.2,-41.1z" fill="#cac3b6" opacity="0.55"/>
<path d="M458.8,601.4 q0.5,54.9 0.2,109.9 l2.4,0 q0.5,-54.9 -0.2,-109.9z" fill="#cac3b6" opacity="0.55"/>
<path d="M442.5,442.5 q0.6,44.9 0.2,89.9 l1.3,0 q0.6,-44.9 -0.2,-89.9z" fill="#cec7ba" opacity="0.55"/>
<path d="M506.2,250.9 q3.1,51.8 0.9,103.6 l1.7,0 q3.1,-51.8 -0.9,-103.6z" fill="#cec7ba" opacity="0.55"/>
<path d="M483.0,483.3 q0.5,20.7 0.1,41.5 l2.1,0 q0.5,-20.7 -0.1,-41.5z" fill="#c8c0b3" opacity="0.55"/>
<path d="M465.1,587.4 q-3.0,54.6 -0.9,109.3 l2.6,0 q-3.0,-54.6 0.9,-109.3z" fill="#cac3b6" opacity="0.55"/>
<path d="M518.3,227.4 q2.6,50.4 0.8,100.7 l1.5,0 q2.6,-50.4 -0.8,-100.7z" fill="#c5bdb0" opacity="0.55"/>
<path d="M457.6,377.8 q2.3,13.4 0.7,26.9 l1.1,0 q2.3,-13.4 -0.7,-26.9z" fill="#cac3b6" opacity="0.55"/>
<path d="M528.3,639.3 q0.9,16.2 0.3,32.4 l2.5,0 q0.9,-16.2 -0.3,-32.4z" fill="#cec7ba" opacity="0.55"/>
<path d="M500.8,502.7 q-2.9,17.1 -0.9,34.3 l1.8,0 q-2.9,-17.1 0.9,-34.3z" fill="#c8c0b3" opacity="0.55"/>
<path d="M476.7,390.3 q-2.0,17.8 -0.6,35.6 l2.0,0 q-2.0,-17.8 0.6,-35.6z" fill="#c5bdb0" opacity="0.55"/>
<path d="M528.5,91.0 q-0.8,45.3 -0.2,90.6 l2.4,0 q-0.8,-45.3 0.2,-90.6z" fill="#cac3b6" opacity="0.55"/>
<path d="M487.3,119.5 q2.0,25.5 0.6,51.1 l2.8,0 q2.0,-25.5 -0.6,-51.1z" fill="#cec7ba" opacity="0.55"/>
<path d="M486.1,636.9 q2.6,47.7 0.8,95.4 l2.7,0 q2.6,-47.7 -0.8,-95.4z" fill="#cec7ba" opacity="0.55"/>
<path d="M451.2,126.5 q-0.6,52.3 -0.2,104.5 l1.7,0 q-0.6,-52.3 0.2,-104.5z" fill="#cec7ba" opacity="0.55"/>
<path d="M442.3,586.2 q1.9,23.3 0.6,46.6 l2.2,0 q1.9,-23.3 -0.6,-46.6z" fill="#cec7ba" opacity="0.55"/>
<path d="M496.8,496.1 q-2.0,23.7 -0.6,47.4 l2.2,0 q-2.0,-23.7 0.6,-47.4z" fill="#c8c0b3" opacity="0.55"/>
<path d="M520.2,200.6 q1.6,49.3 0.5,98.6 l2.9,0 q1.6,-49.3 -0.5,-98.6z" fill="#cec7ba" opacity="0.55"/>
<path d="M490.0,198.7 q3.0,23.8 0.9,47.6 l1.8,0 q3.0,-23.8 -0.9,-47.6z" fill="#cac3b6" opacity="0.55"/>
<path d="M534.9,483.9 q0.5,49.2 0.2,98.4 l1.7,0 q0.5,-49.2 -0.2,-98.4z" fill="#cec7ba" opacity="0.55"/>
<path d="M455.6,436.7 q-3.2,29.0 -1.0,57.9 l1.2,0 q-3.2,-29.0 1.0,-57.9z" fill="#c8c0b3" opacity="0.55"/>
<path d="M515.3,131.8 q-1.6,34.2 -0.5,68.4 l2.9,0 q-1.6,-34.2 0.5,-68.4z" fill="#c8c0b3" opacity="0.55"/>
<path d="M509.2,73.9 q2.5,17.7 0.8,35.5 l1.9,0 q2.5,-17.7 -0.8,-35.5z" fill="#cec7ba" opacity="0.55"/>
<path d="M477.7,266.8 q-0.4,36.3 -0.1,72.7 l1.1,0 q-0.4,-36.3 0.1,-72.7z" fill="#c8c0b3" opacity="0.55"/>
<path d="M469.8,248.1 q3.0,16.4 0.9,32.9 l2.6,0 q3.0,-16.4 -0.9,-32.9z" fill="#cec7ba" opacity="0.55"/>
<path d="M459.3,558.2 q2.7,41.2 0.8,82.3 l1.1,0 q2.7,-41.2 -0.8,-82.3z" fill="#c5bdb0" opacity="0.55"/>
<path d="M473.6,334.0 q0.3,17.7 0.1,35.5 l2.8,0 q0.3,-17.7 -0.1,-35.5z" fill="#cac3b6" opacity="0.55"/>
<path d="M462.4,610.7 q1.8,53.9 0.5,107.9 l2.3,0 q1.8,-53.9 -0.5,-107.9z" fill="#c5bdb0" opacity="0.55"/>
<path d="M469.7,582.2 q-1.3,49.1 -0.4,98.3 l2.4,0 q-1.3,-49.1 0.4,-98.3z" fill="#cac3b6" opacity="0.55"/>
<path d="M530.9,511.8 q-3.0,28.7 -0.9,57.4 l1.3,0 q-3.0,-28.7 0.9,-57.4z" fill="#c5bdb0" opacity="0.55"/>
<path d="M505.7,216.0 q2.3,42.4 0.7,84.8 l2.0,0 q2.3,-42.4 -0.7,-84.8z" fill="#c5bdb0" opacity="0.55"/>
<path d="M402.4,444.0 q3.8,49.8 1.1,99.6 l2.2,0 q3.8,-49.8 -1.1,-99.6z" fill="#cac3b6" opacity="0.55"/>
<path d="M433.7,164.7 q-0.3,20.2 -0.1,40.3 l1.3,0 q-0.3,-20.2 0.1,-40.3z" fill="#c8c0b3" opacity="0.55"/>
<path d="M384.6,592.0 q0.8,13.3 0.2,26.6 l2.8,0 q0.8,-13.3 -0.2,-26.6z" fill="#c8c0b3" opacity="0.55"/>
<path d="M397.1,205.5 q3.9,46.1 1.2,92.3 l1.2,0 q3.9,-46.1 -1.2,-92.3z" fill="#c5bdb0" opacity="0.55"/>
<path d="M391.4,164.0 q3.9,43.0 1.2,86.1 l1.1,0 q3.9,-43.0 -1.2,-86.1z" fill="#cac3b6" opacity="0.55"/>
<path d="M382.0,327.7 q-3.5,43.8 -1.1,87.6 l1.8,0 q-3.5,-43.8 1.1,-87.6z" fill="#cec7ba" opacity="0.55"/>
<path d="M383.8,510.5 q2.3,50.9 0.7,101.9 l1.6,0 q2.3,-50.9 -0.7,-101.9z" fill="#cec7ba" opacity="0.55"/>
<path d="M411.0,353.3 q0.8,48.0 0.2,96.1 l2.4,0 q0.8,-48.0 -0.2,-96.1z" fill="#cac3b6" opacity="0.55"/>
<path d="M426.3,125.0 q2.3,29.6 0.7,59.2 l2.3,0 q2.3,-29.6 -0.7,-59.2z" fill="#c5bdb0" opacity="0.55"/>
<path d="M427.5,196.8 q-1.9,32.0 -0.6,64.0 l1.4,0 q-1.9,-32.0 0.6,-64.0z" fill="#cec7ba" opacity="0.55"/>
<path d="M392.2,623.0 q-1.4,12.4 -0.4,24.7 l1.9,0 q-1.4,-12.4 0.4,-24.7z" fill="#cac3b6" opacity="0.55"/>
<path d="M416.5,413.0 q2.9,46.3 0.9,92.6 l2.0,0 q2.9,-46.3 -0.9,-92.6z" fill="#c5bdb0" opacity="0.55"/>
<path d="M381.9,126.3 q1.0,18.0 0.3,36.0 l2.3,0 q1.0,-18.0 -0.3,-36.0z" fill="#cac3b6" opacity="0.55"/>
<path d="M383.2,306.7 q2.1,41.3 0.6,82.6 l2.6,0 q2.1,-41.3 -0.6,-82.6z" fill="#c5bdb0" opacity="0.55"/>
<path d="M409.9,437.0 q-2.7,33.0 -0.8,66.0 l1.8,0 q-2.7,-33.0 0.8,-66.0z" fill="#cac3b6" opacity="0.55"/>
<path d="M421.4,541.9 q-0.3,45.4 -0.1,90.8 l1.1,0 q-0.3,-45.4 0.1,-90.8z" fill="#cec7ba" opacity="0.55"/>
<path d="M421.9,468.2 q-2.8,53.1 -0.9,106.1 l1.3,0 q-2.8,-53.1 0.9,-106.1z" fill="#cac3b6" opacity="0.55"/>
<path d="M407.3,492.1 q-3.3,11.8 -1.0,23.5 l1.5,0 q-3.3,-11.8 1.0,-23.5z" fill="#cac3b6" opacity="0.55"/>
<path d="M413.4,333.7 q-1.6,52.1 -0.5,104.2 l2.9,0 q-1.6,-52.1 0.5,-104.2z" fill="#cac3b6" opacity="0.55"/>
<path d="M387.1,556.1 q-1.1,28.8 -0.3,57.7 l1.2,0 q-1.1,-28.8 0.3,-57.7z" fill="#cac3b6" opacity="0.55"/>
<path d="M400.2,629.1 q0.7,37.5 0.2,75.0 l1.1,0 q0.7,-37.5 -0.2,-75.0z" fill="#cec7ba" opacity="0.55"/>
<path d="M321.9,487.7 q-0.3,35.5 -0.1,71.1 l2.8,0 q-0.3,-35.5 0.1,-71.1z" fill="#cac3b6" opacity="0.55"/>
<path d="M314.7,549.0 q-0.7,27.2 -0.2,54.3 l2.6,0 q-0.7,-27.2 0.2,-54.3z" fill="#cac3b6" opacity="0.55"/>
<path d="M313.0,520.1 q-2.3,46.2 -0.7,92.4 l2.0,0 q-2.3,-46.2 0.7,-92.4z" fill="#cec7ba" opacity="0.55"/>
<path d="M315.6,239.0 q2.9,30.1 0.9,60.2 l3.0,0 q2.9,-30.1 -0.9,-60.2z" fill="#cac3b6" opacity="0.55"/>
<rect x="357.1" y="282.1" width="1.5" height="13.6" fill="#dedbd0" opacity="0.35"/>
<rect x="469.0" y="270.4" width="1.5" height="23.7" fill="#dedbd0" opacity="0.35"/>
<rect x="314.3" y="165.6" width="1.5" height="23.1" fill="#dedbd0" opacity="0.35"/>
<rect x="400.4" y="595.7" width="1.5" height="45.8" fill="#dedbd0" opacity="0.35"/>
<rect x="371.8" y="269.4" width="1.5" height="17.7" fill="#dedbd0" opacity="0.35"/>
<rect x="525.4" y="268.6" width="1.5" height="48.3" fill="#dedbd0" opacity="0.35"/>
<rect x="476.4" y="586.1" width="1.5" height="11.0" fill="#dedbd0" opacity="0.35"/>
<rect x="384.1" y="283.0" width="1.5" height="14.2" fill="#dedbd0" opacity="0.35"/>
<rect x="512.9" y="248.6" width="1.5" height="48.5" fill="#dedbd0" opacity="0.35"/>
<rect x="429.4" y="91.8" width="1.5" height="29.7" fill="#dedbd0" opacity="0.35"/>
<rect x="364.8" y="83.7" width="1.5" height="17.5" fill="#dedbd0" opacity="0.35"/>
<rect x="446.9" y="78.4" width="1.5" height="25.6" fill="#dedbd0" opacity="0.35"/>
<rect x="407.5" y="375.5" width="1.5" height="16.8" fill="#dedbd0" opacity="0.35"/>
<rect x="472.5" y="211.0" width="1.5" height="46.3" fill="#dedbd0" opacity="0.35"/>
<rect x="463.2" y="145.4" width="1.5" height="20.2" fill="#dedbd0" opacity="0.35"/>
<rect x="374.5" y="473.4" width="1.5" height="30.3" fill="#dedbd0" opacity="0.35"/>
<rect x="398.9" y="562.3" width="1.5" height="21.3" fill="#dedbd0" opacity="0.35"/>
<rect x="377.2" y="260.1" width="1.5" height="20.8" fill="#dedbd0" opacity="0.35"/>
<rect x="319.4" y="74.2" width="1.5" height="41.5" fill="#dedbd0" opacity="0.35"/>
<rect x="440.2" y="529.1" width="1.5" height="58.8" fill="#dedbd0" opacity="0.35"/>
<rect x="378.6" y="448.9" width="1.5" height="56.0" fill="#dedbd0" opacity="0.35"/>
<rect x="359.7" y="459.7" width="1.5" height="43.3" fill="#dedbd0" opacity="0.35"/>
<rect x="529.7" y="563.7" width="1.5" height="21.7" fill="#dedbd0" opacity="0.35"/>
<rect x="455.5" y="112.1" width="1.5" height="31.4" fill="#dedbd0" opacity="0.35"/>
<rect x="400.3" y="94.9" width="1.5" height="29.2" fill="#dedbd0" opacity="0.35"/>
<rect x="385.5" y="348.3" width="1.5" height="24.0" fill="#dedbd0" opacity="0.35"/>
<rect x="346.5" y="293.4" width="1.5" height="33.8" fill="#dedbd0" opacity="0.35"/>
<rect x="348.3" y="445.8" width="1.5" height="22.0" fill="#dedbd0" opacity="0.35"/>
<rect x="331.4" y="258.3" width="1.5" height="31.1" fill="#dedbd0" opacity="0.35"/>
<rect x="344.7" y="397.9" width="1.5" height="45.1" fill="#dedbd0" opacity="0.35"/>
<ellipse cx="455" cy="190" rx="1.6" ry="2.6" fill="#aba59b" opacity="0.7"/>
<ellipse cx="457" cy="197" rx="1.6" ry="2.6" fill="#aba59b" opacity="0.7"/>
<ellipse cx="338" cy="352" rx="1.6" ry="2.6" fill="#aba59b" opacity="0.7"/>
<ellipse cx="361" cy="382" rx="1.6" ry="2.6" fill="#aba59b" opacity="0.7"/>
<ellipse cx="445" cy="432" rx="1.6" ry="2.6" fill="#aba59b" opacity="0.7"/>
<ellipse cx="483" cy="548" rx="1.6" ry="2.6" fill="#aba59b" opacity="0.7"/>
<ellipse cx="515" cy="560" rx="1.6" ry="2.6" fill="#aba59b" opacity="0.7"/>
<ellipse cx="336" cy="130" rx="1.6" ry="2.6" fill="#aba59b" opacity="0.7"/>
<ellipse cx="520" cy="300" rx="1.6" ry="2.6" fill="#aba59b" opacity="0.7"/>
<ellipse cx="365" cy="450" rx="1.6" ry="2.6" fill="#aba59b" opacity="0.7"/>
</g>
<polygon points="541.9,69.6 548.5,70.2 545.2,639.3 538.6,640.5" fill="#c2c1bd"/>
<polygon points="541.9,69.6 543.8,69.9 540.5,640.1 538.6,640.5" fill="#a99e8a"/>
<polygon points="550.0,70.5 657.7,106.9 651.3,580.6 545.9,638.9" fill="#8b7358"/>
<g clip-path="url(#cs)">
<polygon points="585,60 628,60 626,650 583,650" fill="#9a836a" opacity="0.7" filter="url(#bl)"/>
<polygon points="595,60 618,60 616,650 593,650" fill="#a08a70" opacity="0.5" filter="url(#bl)"/>
<rect x="598.0" y="466.1" width="1.3" height="11.4" fill="#836b50" opacity="0.7"/>
<rect x="631.5" y="589.2" width="1.3" height="26.3" fill="#957e64" opacity="0.6"/>
<rect x="590.1" y="248.8" width="0.8" height="25.2" fill="#836b50" opacity="0.7"/>
<rect x="576.4" y="276.5" width="1.8" height="27.8" fill="#806850" opacity="0.6"/>
<rect x="606.4" y="283.0" width="1.9" height="30.5" fill="#a18b72" opacity="0.7"/>
<rect x="600.2" y="606.6" width="1.6" height="56.3" fill="#a59078" opacity="0.7"/>
<rect x="603.6" y="96.9" width="1.4" height="14.1" fill="#a59078" opacity="0.7"/>
<rect x="581.9" y="587.6" width="1.0" height="12.3" fill="#957e64" opacity="0.6"/>
<rect x="575.0" y="269.0" width="1.0" height="68.6" fill="#806850" opacity="0.6"/>
<rect x="571.4" y="209.7" width="1.4" height="23.2" fill="#73604a" opacity="0.6"/>
<rect x="546.3" y="377.3" width="1.7" height="60.9" fill="#7a6349" opacity="0.6"/>
<rect x="604.7" y="385.2" width="2.0" height="59.9" fill="#836b50" opacity="0.7"/>
<rect x="570.8" y="120.3" width="1.8" height="11.2" fill="#806850" opacity="0.6"/>
<rect x="611.4" y="458.2" width="1.8" height="67.8" fill="#9d876d" opacity="0.7"/>
<rect x="577.3" y="459.8" width="1.2" height="58.3" fill="#73604a" opacity="0.6"/>
<rect x="572.9" y="494.4" width="1.1" height="42.0" fill="#806850" opacity="0.6"/>
<rect x="580.0" y="469.6" width="1.7" height="65.0" fill="#7a6349" opacity="0.6"/>
<rect x="639.0" y="534.3" width="1.2" height="63.1" fill="#73604a" opacity="0.6"/>
<rect x="594.2" y="454.0" width="1.5" height="12.4" fill="#a59078" opacity="0.7"/>
<rect x="627.8" y="91.0" width="1.4" height="25.2" fill="#a59078" opacity="0.7"/>
<rect x="569.8" y="428.2" width="1.6" height="32.1" fill="#806850" opacity="0.6"/>
<rect x="577.4" y="500.4" width="1.8" height="60.6" fill="#73604a" opacity="0.6"/>
<rect x="606.3" y="132.8" width="1.1" height="54.4" fill="#9d876d" opacity="0.7"/>
<rect x="557.8" y="278.6" width="1.1" height="50.2" fill="#806850" opacity="0.6"/>
<rect x="637.5" y="333.7" width="1.7" height="51.6" fill="#806850" opacity="0.6"/>
<rect x="571.2" y="217.2" width="1.6" height="25.1" fill="#73604a" opacity="0.6"/>
<rect x="633.7" y="633.5" width="1.7" height="12.9" fill="#7a6349" opacity="0.6"/>
<rect x="627.9" y="172.4" width="1.4" height="31.4" fill="#a18b72" opacity="0.7"/>
<rect x="584.0" y="584.7" width="1.8" height="60.0" fill="#9d876d" opacity="0.7"/>
<rect x="581.1" y="239.3" width="1.8" height="58.0" fill="#957e64" opacity="0.6"/>
<rect x="567.0" y="478.7" width="1.0" height="34.5" fill="#73604a" opacity="0.6"/>
<rect x="609.4" y="185.6" width="1.8" height="27.0" fill="#a59078" opacity="0.7"/>
<rect x="562.5" y="122.1" width="1.1" height="66.0" fill="#73604a" opacity="0.6"/>
<rect x="586.7" y="148.1" width="1.1" height="63.1" fill="#9d876d" opacity="0.7"/>
<rect x="571.7" y="292.1" width="0.9" height="29.3" fill="#806850" opacity="0.6"/>
<rect x="580.4" y="210.6" width="0.9" height="13.1" fill="#957e64" opacity="0.6"/>
<rect x="609.0" y="62.3" width="1.0" height="30.2" fill="#9d876d" opacity="0.7"/>
<rect x="639.2" y="297.0" width="1.2" height="11.9" fill="#73604a" opacity="0.6"/>
<rect x="598.4" y="184.7" width="1.8" height="47.0" fill="#836b50" opacity="0.7"/>
<rect x="572.0" y="604.6" width="2.0" height="61.9" fill="#73604a" opacity="0.6"/>
<rect x="599.7" y="605.7" width="1.8" height="12.8" fill="#9d876d" opacity="0.7"/>
<rect x="596.7" y="451.4" width="0.8" height="26.3" fill="#836b50" opacity="0.7"/>
<rect x="551.9" y="330.2" width="0.9" height="63.2" fill="#957e64" opacity="0.6"/>
<rect x="547.0" y="365.8" width="1.8" height="58.6" fill="#73604a" opacity="0.6"/>
<rect x="583.5" y="525.8" width="1.7" height="59.7" fill="#a18b72" opacity="0.7"/>
<rect x="634.0" y="339.6" width="1.3" height="60.4" fill="#7a6349" opacity="0.6"/>
<rect x="546.9" y="141.7" width="1.7" height="29.4" fill="#957e64" opacity="0.6"/>
<rect x="622.2" y="271.5" width="1.2" height="48.3" fill="#836b50" opacity="0.7"/>
<rect x="552.3" y="438.9" width="1.1" height="45.7" fill="#806850" opacity="0.6"/>
<rect x="615.7" y="182.6" width="1.5" height="54.6" fill="#9d876d" opacity="0.7"/>
<rect x="562.7" y="121.4" width="1.2" height="18.6" fill="#73604a" opacity="0.6"/>
<rect x="548.1" y="291.8" width="0.9" height="13.1" fill="#806850" opacity="0.6"/>
<rect x="548.0" y="161.2" width="1.5" height="14.0" fill="#957e64" opacity="0.6"/>
<rect x="586.4" y="618.3" width="1.3" height="23.2" fill="#9d876d" opacity="0.7"/>
<rect x="622.4" y="100.6" width="1.9" height="33.4" fill="#9d876d" opacity="0.7"/>
<rect x="619.1" y="364.6" width="1.7" height="10.6" fill="#a59078" opacity="0.7"/>
<rect x="631.6" y="92.1" width="1.2" height="47.0" fill="#73604a" opacity="0.6"/>
<rect x="626.5" y="424.6" width="1.5" height="40.3" fill="#a18b72" opacity="0.7"/>
<rect x="557.4" y="488.4" width="1.3" height="54.6" fill="#73604a" opacity="0.6"/>
<rect x="585.4" y="283.1" width="1.5" height="23.8" fill="#a18b72" opacity="0.7"/>
<rect x="594.4" y="78.7" width="1.3" height="47.6" fill="#a18b72" opacity="0.7"/>
<rect x="601.9" y="600.3" width="1.4" height="19.1" fill="#836b50" opacity="0.7"/>
<rect x="615.4" y="241.5" width="2.0" height="54.2" fill="#a59078" opacity="0.7"/>
<rect x="550.9" y="621.5" width="1.9" height="55.2" fill="#7a6349" opacity="0.6"/>
<rect x="568.0" y="547.3" width="1.9" height="49.0" fill="#7a6349" opacity="0.6"/>
<rect x="621.0" y="356.7" width="0.9" height="69.6" fill="#a18b72" opacity="0.7"/>
<rect x="612.9" y="205.4" width="1.3" height="58.4" fill="#a18b72" opacity="0.7"/>
<rect x="627.4" y="173.7" width="1.6" height="26.8" fill="#a18b72" opacity="0.7"/>
<rect x="556.1" y="315.5" width="1.9" height="55.4" fill="#7a6349" opacity="0.6"/>
<rect x="621.2" y="555.9" width="1.5" height="56.2" fill="#a18b72" opacity="0.7"/>
<path d="M629,75 L627,640" stroke="#6e5a44" stroke-width="1.2" opacity="0.8"/>
<rect x="545" y="60" width="115" height="590" filter="url(#grainS)" opacity="0.28"/>
<rect x="561" y="420" width="2.5" height="60" fill="#6a5540" opacity="0.6"/>
<rect x="566" y="470" width="2.5" height="80" fill="#6a5540" opacity="0.6"/>
<rect x="558" y="520" width="2.5" height="50" fill="#6a5540" opacity="0.6"/>
<rect x="636" y="180" width="2.5" height="40" fill="#6a5540" opacity="0.6"/>
<rect x="634" y="230" width="2.5" height="50" fill="#6a5540" opacity="0.6"/>
<rect x="560" y="600" width="2.5" height="30" fill="#6a5540" opacity="0.6"/>
<rect x="570" y="300" width="2.5" height="25" fill="#6a5540" opacity="0.6"/>
</g>
<path d="M310.8,587.9 L306.2,103.8 L541.9,69.6 L548.5,70.3 L657.7,106.9 L651.3,580.6 L545.9,638.9 L538.6,640.5 Z" fill="none" stroke="#000" stroke-width="1.8" stroke-linejoin="miter"/>
<line x1="549.3" y1="70.5" x2="545.9" y2="639" stroke="#000" stroke-width="2.2"/>
<path d="M360,575 Q368,568 372,570 Q375,574 374,578 Z" fill="#b9b7b2" stroke="#000" stroke-width="1"/>
<path d="M451,596 Q460,589 464,590 Q468,594 466,600 Z" fill="#b9b7b2" stroke="#000" stroke-width="1"/>
<path d="M345.5,572.4 L458.8,598.3 Q464,599.5 463.8,604 Q462.8,608.8 458,608.2 L344.5,582.8 Q340.5,581.8 340.8,577 Q341.5,572 345.5,572.6 Z" fill="url(#hg)" stroke="#000" stroke-width="1"/>
<ellipse cx="462" cy="603.2" rx="2.8" ry="4.6" transform="rotate(12 462 603.2)" fill="#b0aea9" stroke="#000" stroke-width="0.9"/>
<polyline points="263.2,129.8 262.7,93.6 288.9,89.4" fill="none" stroke="#000" stroke-width="1.5"/>
<polyline points="471.5,60.4 506.6,54.6 506.6,98.1" fill="none" stroke="#000" stroke-width="1.5"/>
<polyline points="268.9,569.1 269.6,602.8 294.0,609.1" fill="none" stroke="#000" stroke-width="1.5"/>
<polyline points="504.9,622.4 504.9,662.2 470.9,653.6" fill="none" stroke="#000" stroke-width="1.5"/>
<path d="M420.7,59 L420.7,72 L423.7,69 L426.2,75 L428.6,74 L426.2,68.2 L430,68.2 Z" fill="#000" stroke="#fff" stroke-width="0.8"/>
</svg><!--/CAB-->
<!-- left toolbar -->
<div class="a" style="left:0;top:37px;width:69px;height:603px;border-right:1px solid #fff;border-bottom:1px solid #b8b8b8"></div>
<div class="grip" style="left:2px;top:40px;width:64px;height:4px;background-size:4px 4px"></div>
<div class="a" style="left:0;top:47px;width:34px;height:33px;background:#c6dbef;border:1px solid #99c9f5"></div>
<div class="a" style="left:2px;top:117px;width:64px;height:1px;background:#9a9a9a"></div>
<div class="a" style="left:2px;top:295px;width:64px;height:1px;background:#9a9a9a"></div>
<div class="a" style="left:2px;top:405px;width:64px;height:1px;background:#9a9a9a"></div>
<div class="a" style="left:2px;top:515px;width:64px;height:1px;background:#9a9a9a"></div>
<div class="a" style="left:2px;top:625px;width:64px;height:1px;background:#9a9a9a"></div>
<svg id="caret" class="a" style="left:14px;top:634px" width="6" height="4"><path d="M1,3 L3,1 L5,3" fill="#444"/></svg>
<!-- F6 box -->
<div class="a" style="left:0;top:640px;width:36px;height:40px;border-right:1px solid #b8b8b8;border-bottom:1px solid #b8b8b8"></div>

<!--LEFT--><svg class="a" style="left:0;top:0" width="70" height="682"><g transform="translate(18,63.5)"><path d="M-5,-10 L-5,8 L-1.2,4.2 L1.8,10.5 L4.6,9.3 L1.6,3 L6.8,3 Z" fill="#000" stroke="#fff" stroke-width="0.9"/></g><g transform="translate(51,63.5)"><polygon points="-11,-7 -1,-11 10,-4 8,6 -5,13 -9,3" fill="#e8e6de" stroke="#a8a8a2" stroke-width="2.2" stroke-linejoin="round"/><path d="M-11,-7 L0,-1 L10,-4 M0,-1 L-5,13 M-7,-5 L4,-8 M-8,0 L2,-3 M-6,5 L1,3 M3,1 L6,4" fill="none" stroke="#a8a8a2" stroke-width="1.6"/><polygon points="1,-1 9,-3 7,5 -2,9" fill="#d8d6cc"/></g><g transform="translate(17,97.5)"><polygon points="-9.5,-3 1.5,-9.5 9.5,2.5 6,9.5 -3,7" fill="#d6d094" stroke="#333" stroke-width="1.3" stroke-linejoin="round"/><ellipse cx="-4" cy="-6" rx="6.8" ry="3.6" transform="rotate(-32 -4 -6)" fill="#8aaabb" stroke="#333" stroke-width="1.3"/><path d="M3,-8 Q9,-9 8,-1" fill="none" stroke="#222" stroke-width="1.3"/><path d="M-1,-3 L6,7" stroke="#444" stroke-width="1.2"/><path d="M-13.3,3 Q-12,-1 -2,-3 Q-7,3 -9.5,10.8 Q-13,9 -13.3,3 Z" fill="#f0b000" stroke="#554400" stroke-width="0.6"/></g><g transform="translate(51,97.5)"><polygon points="-9.5,-1.2 1.4,-11.2 10.8,-9.2 0.8,3.4" fill="#f4a0b8" stroke="#222" stroke-width="1"/><polygon points="-11.8,5.7 -0.3,12 0.8,3.4 -9.5,-1.2" fill="#f07890" stroke="#222" stroke-width="1"/><polygon points="0.8,3.4 10.8,-9.2 10.8,-7 -0.3,12" fill="#c05070" stroke="#222" stroke-width="0.9"/><path d="M-3,-2 L5,-7" stroke="#6a3ac0" stroke-width="1.2" stroke-dasharray="1 0.8"/></g><g transform="translate(17,140)"><path d="M-10,10 L-7,3 L6,-10 Q9,-12 10.5,-9 Q11,-7 9,-5 L-3,7 Z" fill="#e01818" stroke="#222" stroke-width="1.2"/><path d="M-10,10 L-7,3 L-3,7 Z" fill="#e8d8a0" stroke="#222" stroke-width="0.8"/><path d="M6,-10 Q9,-12 10.5,-9 Q11,-7 9,-5 Z" fill="#d87878"/></g><g transform="translate(51,140)"><path d="M9,-11 Q12,-5 7,-4 Q-5,-6 -7,-8 Q-11,-6 -5,-2 Q6,2 8,5 Q9,10 5,10 Q2,9 -2,5 Q-7,1 -9,6 L-10,10" fill="none" stroke="#c00" stroke-width="1.3"/><circle cx="9" cy="-11" r="1.8" fill="#e00"/><circle cx="-10" cy="10" r="1.8" fill="#e00"/></g><g transform="translate(17,174)"><rect x="-8.5" y="-10" width="16.5" height="19.5" fill="#8c8a82" stroke="#5a4a3a" stroke-width="0.6"/><line x1="-8.5" y1="9.5" x2="8" y2="-10" stroke="#f33" stroke-width="1"/><circle cx="-8.5" cy="9.5" r="1.5" fill="#e00"/><circle cx="8" cy="-10" r="1.5" fill="#e00"/></g><g transform="translate(51,174)"><rect x="-8.5" y="-10" width="16.5" height="19.5" fill="#8c8a82"/><path d="M-8.5,-6 Q8,-5 8,9.5" fill="none" stroke="#f33" stroke-width="1"/><path d="M-8.5,-10 L-8.5,9.5 L8,9.5" fill="none" stroke="#f33" stroke-width="1"/><circle cx="-8.5" cy="-10" r="1.5" fill="#e00"/><circle cx="-8.5" cy="-6" r="1.5" fill="#e00"/><circle cx="-8.5" cy="9.5" r="1.5" fill="#e00"/><circle cx="8" cy="9.5" r="1.5" fill="#e00"/></g><g transform="translate(17,208)"><circle cx="0" cy="0" r="10.8" fill="#8c8a82" stroke="#6a5a48" stroke-width="0.6"/><line x1="0" y1="0" x2="7.5" y2="-7.5" stroke="#f33" stroke-width="1.1"/><circle cx="0" cy="0" r="1.6" fill="#e00"/><circle cx="7.5" cy="-7.5" r="1.5" fill="#e00"/></g><g transform="translate(51,208)"><polygon points="-7,-7 6,-8 9,2 1,9 -9,4" fill="#8c8a82"/><circle cx="0" cy="0" r="10.8" fill="none" stroke="#f33" stroke-width="1"/><line x1="0" y1="0" x2="8" y2="-7.5" stroke="#f33" stroke-width="1.1"/><circle cx="0" cy="0" r="1.6" fill="#e00"/><circle cx="8" cy="-7.5" r="1.5" fill="#e00"/></g><g transform="translate(17,242)"><line x1="-9.5" y1="-10" x2="10" y2="-10" stroke="#f33" stroke-width="1.1"/><path d="M10,-10 Q9,8 -9.5,9" fill="none" stroke="#222" stroke-width="1.2"/><line x1="-9.5" y1="9" x2="10" y2="-10" stroke="#f33" stroke-width="1.1"/><circle cx="-9.5" cy="-10" r="1.8" fill="#e00"/><circle cx="10" cy="-10" r="1.8" fill="#e00"/><circle cx="-9.5" cy="9" r="1.8" fill="#e00"/></g><g transform="translate(51,242)"><path d="M-6.5,9 Q-15,-8 0,-10 Q9,-10 10,-6" fill="none" stroke="#222" stroke-width="1.2"/><line x1="-6.5" y1="9" x2="10" y2="-6" stroke="#f33" stroke-width="1.2"/><line x1="-6.5" y1="-7" x2="2" y2="1.5" stroke="#f33" stroke-width="1.2"/><circle cx="-6.5" cy="9" r="1.8" fill="#e00"/><circle cx="10" cy="-6" r="1.8" fill="#e00"/><circle cx="-6.5" cy="-7" r="1.8" fill="#e00"/></g><g transform="translate(17,276)"><path d="M-9,3 Q-2,11 8,8 Q13,0 8,-5 Q4,-10 -2,-9" fill="none" stroke="#222" stroke-width="1.2"/><polyline points="-2,-9 8,8 -9,3" fill="none" stroke="#f33" stroke-width="1.2"/><circle cx="-2" cy="-9" r="1.8" fill="#e00"/><circle cx="8" cy="8" r="1.8" fill="#e00"/><circle cx="-9" cy="3" r="1.8" fill="#e00"/></g><g transform="translate(51,276)"><path d="M-10,-9 L9,-9 Q9,7 -10,9 Z" fill="#7e7c74"/><path d="M9,-9 Q9,7 -10,9" fill="none" stroke="#222" stroke-width="1"/><line x1="-10" y1="-9" x2="9" y2="-9" stroke="#f33" stroke-width="1.1"/><line x1="-10" y1="9" x2="9" y2="-9" stroke="#f33" stroke-width="1.3"/><line x1="-10" y1="-9" x2="-10" y2="9" stroke="#f33" stroke-width="0.8"/><circle cx="-10" cy="-9" r="1.8" fill="#e00"/><circle cx="9" cy="-9" r="1.8" fill="#e00"/><circle cx="-10" cy="9" r="1.8" fill="#e00"/></g><g transform="translate(17,318)"><path d="M0,-11 L4,-6 L1.5,-6 L1.5,-1.5 L6,-1.5 L6,-4 L11,0 L6,4 L6,1.5 L1.5,1.5 L1.5,6 L4,6 L0,11 L-4,6 L-1.5,6 L-1.5,1.5 L-6,1.5 L-6,4 L-11,0 L-6,-4 L-6,-1.5 L-1.5,-1.5 L-1.5,-6 L-4,-6 Z" fill="#e00" stroke="#700" stroke-width="0.6"/><rect x="-3.5" y="-3.5" width="7" height="7" fill="#fff" transform="rotate(45)"/></g><g transform="translate(51,318)"><polygon points="-10,2 0,-4 10,2 0,8" fill="#8c8a82" stroke="#222" stroke-width="1"/><polygon points="-10,2 0,8 0,10 -10,4" fill="#555" stroke="#222" stroke-width="0.7"/><polygon points="0,8 10,2 10,4 0,10" fill="#444" stroke="#222" stroke-width="0.7"/><path d="M-2,3 L-2,-4 L-5,-4 L0,-11 L5,-4 L2,-4 L2,3 Z" fill="#e00" stroke="#900" stroke-width="0.5"/></g><g transform="translate(17,352)"><path d="M-8,-1 Q-7,-9 2,-9 Q7,-8 8,-4" fill="none" stroke="#e00" stroke-width="3"/><polygon points="11,-6 5,2 3,-7" fill="#e00"/><path d="M8,2 Q7,9 -2,9 Q-7,8 -8,4" fill="none" stroke="#e00" stroke-width="3"/><polygon points="-11,6 -5,-2 -3,7" fill="#e00"/></g><g transform="translate(51,352)"><path d="M-10,4 Q-10,-8 3,-10 Q10,-10 11,-6 L8,2 Q4,-4 -2,-1 Q-5,2 -5,8 Q-7,10 -10,4 Z" fill="#6a6660" stroke="#222" stroke-width="1"/><path d="M-5,4 Q-4,-4 4,-4" fill="none" stroke="#e00" stroke-width="2.5"/><polygon points="2,-8 9,-4 3,1" fill="#e00"/></g><g transform="translate(17,386)"><rect x="-11" y="-6" width="18" height="17" fill="none" stroke="#f33" stroke-width="0.8"/><rect x="-11" y="-3" width="14" height="14" fill="#8c8a82" stroke="#222" stroke-width="1"/><path d="M-3,2 L6,-6" stroke="#e00" stroke-width="3"/><polygon points="9,-10 8,-1 1,-7" fill="#e00" stroke="#333" stroke-width="0.6"/></g><g transform="translate(51,386)"><path d="M-9,-4 Q0,-12 8,-6 Q12,0 9,8" fill="none" stroke="#e00" stroke-width="1.3"/><path d="M-5,7 Q-4,-2 1,-4" fill="none" stroke="#222" stroke-width="1"/><path d="M-2,9 Q-1,1 3,-1" fill="none" stroke="#222" stroke-width="1"/><path d="M-2,5 L5,-2" stroke="#e00" stroke-width="3"/><polygon points="8,-6 7,1 1,-4" fill="#e00"/></g><g transform="translate(17,427)"><path d="M-2,-8 Q3,-12 8,-9 Q11,-6 8,0 Q4,5 -2,4 Q-6,2 -5,-3 Z" fill="#222"/><ellipse cx="2" cy="-3" rx="4" ry="5" transform="rotate(35 2 -3)" fill="#f0c800" stroke="#777" stroke-width="1.2"/><path d="M-4,2 L-11,8" stroke="#f0c800" stroke-width="3.5"/><path d="M-4,2 L-11,8" stroke="#222" stroke-width="5" opacity="0.25"/><rect x="-13" y="7" width="3" height="4" fill="#222" transform="rotate(40 -11 9)"/></g><g transform="translate(51,427)"><path d="M-8,-2 L5,-9" stroke="#222" stroke-width="1"/><path d="M-11,0 L-5,4 M-9,-5 L-6,1 M2,-11 L8,-7 M4,-12 L7,-5" stroke="#222" stroke-width="1"/><path d="M-7,2 L-1,8 M5,-8 L11,-2" stroke="#222" stroke-width="0.8"/><circle cx="-1" cy="8.5" r="1.3" fill="#2c2"/><circle cx="11" cy="-1.5" r="1.3" fill="#2c2"/><text x="-8" y="-6" font-size="7" font-family="Liberation Serif" fill="#444">5</text></g><g transform="translate(17,461)"><path d="M-10,6 Q-12,-3 -4,-8 Q4,-12 11,-9 L-6,10 Z" fill="#e8c000" stroke="#222" stroke-width="1.2"/><path d="M-6,4 Q-7,-2 -2,-5 Q2,-7 5,-7 Z" fill="#f6f3e0" stroke="#222" stroke-width="0.8"/></g><g transform="translate(51,461)"><rect x="-3" y="-10" width="14" height="12" fill="#fff" stroke="#222" stroke-width="0.9"/><text x="4" y="-1" font-size="8.5" text-anchor="middle" font-family="Liberation Serif" fill="#111">A1</text><path d="M-5,-3 L-5,5" stroke="#999" stroke-width="1.5"/><polygon points="-8,4 -2,4 -5,9" fill="#111"/></g><g transform="translate(17,495)"><line x1="0" y1="2" x2="0" y2="10" stroke="#aaa" stroke-width="1.6"/><line x1="0" y1="0" x2="-6" y2="-4" stroke="#e66" stroke-width="1" stroke-dasharray="1.5 1"/><line x1="0" y1="0" x2="-6" y2="5" stroke="#6c6" stroke-width="1" stroke-dasharray="1.5 1"/><line x1="0" y1="0" x2="0" y2="-7" stroke="#1460b8" stroke-width="2"/><polygon points="-2.5,-6 2.5,-6 0,-11" fill="#1460b8"/><line x1="0" y1="0" x2="7" y2="-4" stroke="#2a2" stroke-width="1.6"/><polygon points="5,-7 10,-6 7,-2" fill="#2a2"/><line x1="0" y1="0" x2="7" y2="5" stroke="#e22" stroke-width="1.6"/><polygon points="5,7 10,7 8,3" fill="#e22"/><circle r="1.7" fill="#111"/></g><g transform="translate(51,495)"><path d="M-10.5,5.5 L-4.5,-11 L1.5,-11 L9,9 L10.5,11 L4,12.5 L1,8 L-2.5,7 L-4,9 L-9,8 Z" fill="#a89070" stroke="#111" stroke-width="1.4" stroke-linejoin="round"/><path d="M-3.5,-9 L-8,5 M-1,-9 L5,9.5 M-5,3 L0,4 M-2,-3 L-4,2" fill="none" stroke="#222" stroke-width="1.2"/><path d="M0.5,-9 L7,9" stroke="#c8b088" stroke-width="1.3"/></g><g transform="translate(17,538)"><path d="M-9,-2 Q-10,-7 -2,-8 L-1,-3 Q-7,-3 -6,1 Z" fill="#d84a1a"/><path d="M-10,0 Q-11,8 0,8 L1,11 L6,6 L0,2 L0,5 Q-7,5 -7,1 Z" fill="#d8201a" stroke="#222" stroke-width="0.6"/><path d="M2,-8 Q10,-8 10,-2 Q10,4 3,5 L2,1 Q7,1 7,-2 Q7,-4 2,-4 Z" fill="#2aa02a" stroke="#222" stroke-width="0.6"/><path d="M2,-8 Q8,-8 9,-4" fill="none" stroke="#8fd08f" stroke-width="1.5"/><line x1="0" y1="-12" x2="0" y2="12" stroke="#000" stroke-width="2"/></g><g transform="translate(51,538)"><path d="M-8,10 Q-10,4 -7,0 L-10,-6 Q-9,-8 -7,-7 L-3,-2 L-5,-9 Q-3,-11 -1,-9 L1,-3 L1,-10 Q3,-11 5,-9 L5,-3 L7,-8 Q9,-8 9,-6 L8,2 Q10,1 12,2 L8,8 Q5,11 -1,11 Z" fill="#f0dcb0" stroke="#666" stroke-width="0.8"/></g><g transform="translate(17,572)"><line x1="-9" y1="10" x2="-2" y2="3" stroke="#222" stroke-width="3" stroke-linecap="round"/><circle cx="3" cy="-3" r="7" fill="#9cc4e8" stroke="#333" stroke-width="1.6"/><path d="M-1,-6 Q1,-8 4,-8" stroke="#fff" stroke-width="1" fill="none"/></g><g transform="translate(51,572)"><rect x="-10" y="-11" width="21" height="21" fill="none" stroke="#e22" stroke-width="1.1"/><line x1="-9" y1="10" x2="-2" y2="3" stroke="#222" stroke-width="3" stroke-linecap="round"/><circle cx="3" cy="-3" r="7" fill="#9cc4e8" stroke="#333" stroke-width="1.6"/></g><g transform="translate(17,606)"><line x1="-9" y1="9" x2="-3" y2="3" stroke="#222" stroke-width="3" stroke-linecap="round"/><circle cx="1" cy="-1" r="5.5" fill="#9cc4e8" stroke="#333" stroke-width="1.4"/><polygon points="-11,-11 -5,-10 -10,-5" fill="#e00"/><polygon points="11,-11 5,-10 10,-5" fill="#e00"/><polygon points="11,11 5,10 10,5" fill="#e00"/><path d="M-9,-9 L-5,-5 M9,-9 L5,-5 M9,9 L5,5" stroke="#e00" stroke-width="1.6"/></g><g transform="translate(51,606)"><line x1="1" y1="3" x2="8" y2="10" stroke="#222" stroke-width="3" stroke-linecap="round"/><circle cx="-4" cy="-3" r="6.5" fill="#9cc4e8" stroke="#333" stroke-width="1.4"/><path d="M-4,-9 Q6,-12 7,-2 L10,-2 L5,4 L1,-2 L4,-2 Q3,-7 -4,-6 Z" fill="#1e88e5" stroke="#0a3a70" stroke-width="0.7"/></g><g transform="translate(0,640)"><path d="M3.5,15.5 Q2.5,12 6.5,11.8 Q10,12 13,11.5 Q15.5,11 16,12.5" fill="none" stroke="#3a3aa8" stroke-width="1.6" stroke-linecap="round"/><path d="M10.5,12 Q8.5,18 9,23 Q9.2,28 5,28.5 Q1.5,28.5 1.8,25.5 Q2.5,23.5 4.5,24.5" fill="none" stroke="#3a3aa8" stroke-width="1.6" stroke-linecap="round"/><path d="M6.5,20 L13.5,19.5" stroke="#3a3aa8" stroke-width="1.4"/><text x="13.5" y="29" font-size="18.5" font-family="Liberation Serif" fill="#3a3aa8">6</text><rect x="1" y="34" width="31" height="1.6" fill="#1aa01a"/><polygon points="19,30 31,30 25,38" fill="#000"/><path d="M2,5 L34,5" stroke="#a0a0a0" stroke-width="1" stroke-dasharray="1 3"/></g></svg><!--/LEFT-->
<!-- bottom toolbar -->
<div class="grip" style="left:2px;top:683px;height:33px"></div>
<div class="a" style="left:0;top:717px;width:1118px;height:1px;background:#c8c8c8"></div>

<!--BOT--><svg class="a" style="left:0;top:678px" width="1118" height="40" viewBox="0 678 1118 40"><g transform="translate(25,699)"><defs></defs><path d="M-11,-2 Q-5,-6 1,-8.5 Q8,-3 11.5,1 Q5,5 -1.2,8.4 Q-7,2 -11,-2 Z" fill="#1a9ef0" stroke="#333" stroke-width="0.9"/><path d="M-6,-4.5 Q1,2 6,4.5" fill="none" stroke="#0a60b0" stroke-width="2" opacity="0.5"/><text x="6.5" y="10" font-size="15" font-weight="bold" fill="#f00" text-anchor="middle" font-family="Liberation Sans">#</text></g><g transform="translate(59,699)"><defs></defs><path d="M-11,-2 Q-5,-6 1,-8.5 Q8,-3 11.5,1 Q5,5 -1.2,8.4 Q-7,2 -11,-2 Z" fill="#1a9ef0" stroke="#333" stroke-width="0.9"/><path d="M-6,-4.5 Q1,2 6,4.5" fill="none" stroke="#0a60b0" stroke-width="2" opacity="0.5"/></g><g transform="translate(93,699)"><defs></defs><path d="M-11,-2 Q-5,-6 1,-8.5 Q8,-3 11.5,1 Q5,5 -1.2,8.4 Q-7,2 -11,-2 Z" fill="#e8c820" stroke="#333" stroke-width="0.9"/><path d="M-6,-4.5 Q1,2 6,4.5" fill="none" stroke="#a08010" stroke-width="2" opacity="0.5"/><path d="M-7,-4 L5,4 M-3,-6.5 L9,1.5 M-5,2 L5,-5" stroke="#b09010" stroke-width="0.8" fill="none"/></g><g transform="translate(127,699)"><defs></defs><path d="M-11,-2 Q-5,-6 1,-8.5 Q8,-3 11.5,1 Q5,5 -1.2,8.4 Q-7,2 -11,-2 Z" fill="#8ee028" stroke="#333" stroke-width="0.9"/><path d="M-6,-4.5 Q1,2 6,4.5" fill="none" stroke="#50a010" stroke-width="2" opacity="0.5"/><path d="M-5,4 L6,-4" stroke="#50a010" stroke-width="0.8"/></g><g transform="translate(161,699)"><defs></defs><path d="M-11,-2 Q-5,-6 1,-8.5 Q8,-3 11.5,1 Q5,5 -1.2,8.4 Q-7,2 -11,-2 Z" fill="#f03a3a" stroke="#333" stroke-width="0.9"/><path d="M-6,-4.5 Q1,2 6,4.5" fill="none" stroke="#a01010" stroke-width="2" opacity="0.5"/><path d="M-7,-4 L5,4 M-3,-6.5 L9,1.5 M-6,3 L4,-5 M-1,6 L8,-2" stroke="#901010" stroke-width="0.8" fill="none"/></g><g transform="translate(195,699)"><defs></defs><path d="M-11,-2 Q-5,-6 1,-8.5 Q8,-3 11.5,1 Q5,5 -1.2,8.4 Q-7,2 -11,-2 Z" fill="#fafafa" stroke="#666" stroke-width="0.9"/><path d="M-6,-4.5 Q1,2 6,4.5" fill="none" stroke="#888" stroke-width="2" opacity="0.5"/><path d="M-7,-4 L5,4 M-3,-6.5 L9,1.5 M-6,3 L4,-5 M-1,6 L8,-2" stroke="#777" stroke-width="0.7" fill="none"/></g><g transform="translate(229,699)"><path d="M-6,-6 Q2,-12 9,-6 Q13,1 9,6 Q3,12 -4,9 Q-7,7 -7,3 L-3,2 Q-1,5 3,4 Q6,2 5,-2 Q3,-6 -2,-4 L-6,-2 Z" fill="#e08a20" stroke="#8a4a10" stroke-width="0.7"/><path d="M4,-9 Q11,-5 10,2" stroke="#f0b060" stroke-width="2" fill="none"/></g><g transform="translate(263,699)"><rect x="-10" y="-9.5" width="20" height="19" fill="#f00" stroke="#333" stroke-width="0.8"/><rect x="-1" y="0" width="11" height="9.5" fill="#fff" stroke="#333" stroke-width="0.6"/></g><g transform="translate(297,699)"><rect x="-9" y="-9.5" width="18" height="19" fill="#fff" stroke="#333" stroke-width="1.2"/><rect x="-8" y="-4" width="16" height="1.3" fill="#e22"/><rect x="-8" y="3" width="16" height="1.3" fill="#e22"/></g><g transform="translate(331,699)"><path d="M-9,-8 Q-2,-11 2,-8 Q7,-6 10,-9 L9,8 Q4,10 0,8 Q-4,6 -7,9 Z" fill="#fff" stroke="#555" stroke-width="0.9"/><path d="M-9,-8 Q-2,-11 2,-8 Q7,-6 10,-9" fill="none" stroke="#c22" stroke-width="1"/><path d="M-9,-8 L-7,11" stroke="#2a6a9a" stroke-width="1.2"/></g><g transform="translate(365,699)"><polygon points="-10,-3 -3,-6 -3,1 3,-1 3,-6 10,-4 10,6 3,9 -10,6" fill="#e8a860" stroke="#3a2a1a" stroke-width="1"/><polygon points="3,9 10,6 10,-4 3,-1" fill="#6a4a2a"/><polygon points="-10,-3 -3,-6 -1,-5 -8,-2" fill="#c07a30"/></g><g transform="translate(399,699)"><path d="M-10,3 L-3,-1 L-1,4 L-8,8 Z" fill="#aaa" stroke="#555" stroke-width="0.8"/><path d="M-3,-1 L3,-4 L5,1 L-1,4 Z" fill="#fff" stroke="#555" stroke-width="0.8"/><path d="M3,-4 L9,-7 Q11,-4 11,-2 L5,1 Z" fill="#999" stroke="#555" stroke-width="0.8"/></g><g transform="translate(433,699)"><path d="M10,-8 L-2,-8 L-8,2 L-2,10 L0,9 L-5,2 L0,-5 L10,-5 Z" fill="#ddd" stroke="#777" stroke-width="0.9"/><path d="M10,-7 L-1,-7 L-7,2" fill="none" stroke="#aaa" stroke-width="1.5"/></g><g transform="translate(467,699)"><polyline points="-7,8 -4,-1 2,-6 8,-9" fill="none" stroke="#333" stroke-width="0.8"/><circle cx="-7" cy="8" r="2.6" fill="#e00"/><circle cx="-4" cy="-1" r="2.6" fill="#e00"/><circle cx="2" cy="-6" r="2.6" fill="#e00"/><circle cx="8" cy="-9" r="2.6" fill="#e00"/></g><g transform="translate(501,699)"><rect x="-2" y="-11" width="4" height="22" fill="#f05050" stroke="#a03030" stroke-width="0.6"/><rect x="-10" y="-5" width="5" height="10" fill="#f05050" stroke="#a03030" stroke-width="0.6"/><rect x="5" y="-5" width="5" height="10" fill="#f05050" stroke="#a03030" stroke-width="0.6"/><rect x="-11" y="-0.6" width="22" height="1.4" fill="#600"/></g><g transform="translate(535,699)"><rect x="-4.5" y="-10" width="9" height="6" fill="#8ee028" stroke="#4a8010" stroke-width="0.6"/><rect x="-10" y="-2.5" width="20" height="5" fill="#8ee028" stroke="#4a8010" stroke-width="0.6"/><rect x="-4.5" y="4" width="9" height="6" fill="#8ee028" stroke="#4a8010" stroke-width="0.6"/><rect x="-0.6" y="-11" width="1.2" height="22" fill="#444"/></g><g transform="translate(569,699)"><g transform="rotate(45)"><rect x="-2.5" y="-11" width="5" height="22" fill="#2a80e0" stroke="#103a80" stroke-width="0.7"/><rect x="-11" y="-2.5" width="22" height="5" fill="#2a80e0" stroke="#103a80" stroke-width="0.7"/><rect x="-7" y="-1" width="14" height="2" fill="#1a5ab0"/></g></g><g transform="translate(603,699)"><polygon points="-11,10 11,10 6,6 -6,6" fill="#8ee028" stroke="#333" stroke-width="0.6"/><path d="M0,-11 Q1,-5 5,0 Q7,5 3,7 Q0,8 -3,7 Q-7,5 -5,0 Q-1,-5 0,-11 Z" fill="#7ad4f0" stroke="#1a6a9a" stroke-width="0.8"/></g><g transform="translate(637,699)"><polygon points="-11,10 11,10 6,6 -6,6" fill="#8ee028" stroke="#333" stroke-width="0.6"/><path d="M0,-11 Q1,-5 5,0 Q7,5 3,7 Q0,8 -3,7 Q-7,5 -5,0 Q-1,-5 0,-11 Z" fill="#7ad4f0" stroke="#1a6a9a" stroke-width="0.8"/><text x="-6" y="0" font-size="12" font-weight="bold" fill="#333" text-anchor="middle" font-family="Liberation Sans">#</text></g><g transform="translate(671,699)"><polygon points="-0.5,-11 -0.5,11 -11,11" fill="#f6e070" stroke="#6a5a3a" stroke-width="0.8"/><polygon points="0.5,-11 0.5,11 11,11" fill="#f0d040" stroke="#6a5a3a" stroke-width="0.8"/><rect x="-1" y="-11" width="2" height="22" fill="#555"/></g><g transform="translate(705,699)"><path d="M-5,9 Q-11,3 -9,-4 Q-6,-10 1,-10 Q8,-10 9,-4 Q10,1 4,3 Q0,5 1,9" fill="none" stroke="#222" stroke-width="4"/><path d="M-5,9 Q-11,3 -9,-4 Q-6,-10 1,-10 Q8,-10 9,-4 Q10,1 4,3 Q0,5 1,9" fill="none" stroke="#f0b400" stroke-width="2.4"/></g><g transform="translate(739,699)"><path d="M-6,9 Q-10,3 -7,-4" fill="none" stroke="#222" stroke-width="4"/><path d="M-6,9 Q-10,3 -7,-4" fill="none" stroke="#f0b400" stroke-width="2.4"/><path d="M6,-5 Q10,0 5,3 Q0,5 1,9" fill="none" stroke="#222" stroke-width="4"/><path d="M6,-5 Q10,0 5,3 Q0,5 1,9" fill="none" stroke="#f0b400" stroke-width="2.4"/><path d="M-5,-10 L4,-1 M4,-10 L-5,-1" stroke="#e02020" stroke-width="1.6"/></g><g transform="translate(773,699)"><path d="M-5,9 Q-11,3 -9,-4 Q-6,-10 1,-10 Q8,-10 9,-4 Q10,1 4,3 Q0,5 1,9" fill="none" stroke="#222" stroke-width="4.2"/><path d="M-5,9 Q-11,3 -9,-4 Q-6,-10 1,-10 Q8,-10 9,-4 Q10,1 4,3 Q0,5 1,9" fill="none" stroke="#f0c800" stroke-width="2.6"/><path d="M-5,9 Q-11,3 -9,-4 Q-6,-10 1,-10 Q8,-10 9,-4 Q10,1 4,3 Q0,5 1,9" fill="none" stroke="#1a3ab0" stroke-width="2.6" stroke-dasharray="2.5 2.5"/></g><g transform="translate(807,699)"><polygon points="0,-11 3,-3 11,0 3,3 0,11 -3,3 -11,0 -3,-3" fill="#3ab0f0" stroke="#1a70a0" stroke-width="0.6"/><rect x="-3" y="-3" width="6" height="6" fill="#fff" transform="rotate(45)"/><path d="M-3,-3 L3,3 M3,-3 L-3,3" stroke="#6ab" stroke-width="0.8"/></g><g transform="translate(841,699)"><polygon points="-6,-3 8,-5 11,-2 11,9 -3,11 -6,8" fill="#a87050" stroke="#444" stroke-width="0.8"/><path d="M-6,-3 L-3,0 L11,-2 M-3,0 L-3,11" stroke="#6a4a30" stroke-width="0.8" fill="none"/><line x1="-5" y1="-9" x2="-5" y2="0" stroke="#e0c000" stroke-width="1.2"/><line x1="-5" y1="-9" x2="7" y2="-9" stroke="#2c2" stroke-width="1.3"/><line x1="-5" y1="-9" x2="-12" y2="-5" stroke="#8a3a1a" stroke-width="1.3"/></g><g transform="translate(875,699)"><path d="M-4,-5 Q-11,-3 -10,3 Q-8,8 0,8 Q9,8 10,2 Q10,-4 2,-5" fill="none" stroke="#600" stroke-width="4.2"/><path d="M-4,-5 Q-11,-3 -10,3 Q-8,8 0,8 Q9,8 10,2 Q10,-4 2,-5" fill="none" stroke="#e82020" stroke-width="3"/><polygon points="-8,-8 -1,-7 -5,-1" fill="#e82020" stroke="#600" stroke-width="0.6"/></g><g transform="translate(909,699)"><rect x="-10" y="-10" width="7" height="12" fill="#8ee028" stroke="#4a8010" stroke-width="0.7"/><rect x="-10" y="2" width="7" height="9" fill="#7acc20" stroke="#4a8010" stroke-width="0.7"/><polygon points="-1,2 6,-1 10,2 10,9 3,11 -1,9" fill="#8ee028" stroke="#4a8010" stroke-width="0.7"/><path d="M-1,-4 Q3,-11 9,-8 Q11,-5 8,-1" fill="none" stroke="#1a60b0" stroke-width="1.8"/><polygon points="-4,-6 2,-7 0,-1" fill="#1a60b0"/></g><g transform="translate(943,699)"><rect x="-11" y="0" width="10" height="10" fill="none" stroke="#2a2a9a" stroke-width="1"/><rect x="-8" y="-3" width="10" height="10" fill="none" stroke="#2a2a9a" stroke-width="0.8"/><path d="M-11,0 l3,-3 M-1,0 l3,-3 M-11,10 l3,-3 M-1,10 l3,-3" stroke="#2a2a9a" stroke-width="0.8"/><polygon points="-2,-6 5,-11 11,-3 4,2" fill="#fff" stroke="#888" stroke-width="0.7"/><polygon points="4,-6 9,-5 6,1 2,-2" fill="#9a8a70"/><path d="M-2,-6 L3,-5" stroke="#e22" stroke-width="1.5"/></g><g transform="translate(977,699)"><rect x="-11" y="0" width="10" height="10" fill="none" stroke="#2a2a9a" stroke-width="1"/><rect x="-8" y="-3" width="10" height="10" fill="none" stroke="#2a2a9a" stroke-width="0.8"/><path d="M-11,0 l3,-3 M-1,0 l3,-3 M-11,10 l3,-3 M-1,10 l3,-3" stroke="#2a2a9a" stroke-width="0.8"/><path d="M-2,-1 Q-3,-9 4,-10" fill="none" stroke="#e22" stroke-width="2.5"/><path d="M7,-9 Q12,-4 9,4" fill="none" stroke="#e22" stroke-width="2.5"/><polygon points="1,-13 6,-10 1,-7" fill="#e22"/><polygon points="5,3 10,6 11,1" fill="#e22"/></g><g transform="translate(1011,699)"><rect x="-11" y="1" width="10" height="10" fill="none" stroke="#2a2a9a" stroke-width="1"/><rect x="-8" y="-2" width="10" height="10" fill="none" stroke="#2a2a9a" stroke-width="0.8"/><path d="M-11,1 l3,-3 M-1,1 l3,-3 M-11,11 l3,-3 M-1,11 l3,-3" stroke="#2a2a9a" stroke-width="0.8"/><polygon points="-10,-8 -4,-11 1,-5 -5,-2" fill="#fff" stroke="#888" stroke-width="0.7"/><polygon points="-4,-6 0,-5 -2,0" fill="#9a6a30"/><path d="M3,-3 Q0,3 4,8 M7,-4 Q12,2 8,8" fill="none" stroke="#e22" stroke-width="2.3"/></g><g transform="translate(1045,699)"><polygon points="-11,-4 4,-11 11,4 -4,11" fill="#f0e8a0" stroke="#8a7a40" stroke-width="0.9"/><polygon points="-6,-2 2,-6 6,2 -2,6" fill="#e00" stroke="#700" stroke-width="0.6"/></g><g transform="translate(1079,699)"><polygon points="-9.5,-7 -5,-9.5 -0.5,-7 -0.5,-2 -5,0 -9.5,-2" fill="#e22" stroke="#1a2a9a" stroke-width="1"/><path d="M-9.5,-7 L-5,-5 L-0.5,-7 M-5,-5 L-5,0" stroke="#1a2a9a" stroke-width="0.6"/><polygon points="0.5,-7 5,-9.5 9.5,-7 9.5,-2 5,0 0.5,-2" fill="#f0d020" stroke="#1a2a9a" stroke-width="1"/><path d="M0.5,-7 L5,-5 L9.5,-7 M5,-5 L5,0" stroke="#1a2a9a" stroke-width="0.6"/><polygon points="-9.5,3 -5,0.5 -0.5,3 -0.5,8 -5,10 -9.5,8" fill="#f0d020" stroke="#1a2a9a" stroke-width="1"/><path d="M-9.5,3 L-5,5 L-0.5,3 M-5,5 L-5,10" stroke="#1a2a9a" stroke-width="0.6"/><polygon points="0.5,3 5,0.5 9.5,3 9.5,8 5,10 0.5,8" fill="#f0d020" stroke="#1a2a9a" stroke-width="1"/><path d="M0.5,3 L5,5 L9.5,3 M5,5 L5,10" stroke="#1a2a9a" stroke-width="0.6"/></g><g transform="translate(1113,699)"><polygon points="-10,-5 -5,-10 10,-10 10,5 5,10 -10,10" fill="#c8dae6" stroke="#334" stroke-width="0.9"/><path d="M-10,-5 L5,-5 L10,-10 M5,-5 L5,10 M-5,-10 L-5,5 L-10,10 M-5,5 L10,5" fill="none" stroke="#556" stroke-width="0.6"/><circle cx="-10" cy="-5" r="1.2" fill="#111"/><circle cx="5" cy="10" r="1.2" fill="#111"/><circle cx="-10" cy="10" r="1.2" fill="#111"/></g></svg><!--/BOT-->
<!-- tray -->
<div class="a" style="left:841px;top:37px;width:277px;height:1px;background:#d6e4ef"></div>
<div class="a" style="left:841px;top:38px;width:277px;height:3px;background:#d6d4ca"></div>
<div class="a" style="left:841px;top:41px;width:277px;height:11px;background:#c6d9ea"></div>
<div class="a" style="left:841px;top:52px;width:277px;height:3px;background:#d8e9f3"></div>
<div class="a" style="left:846px;top:40px;font-size:11px;line-height:14px;color:#1a0010">Default Tray</div>
<div class="a" style="left:1104px;top:41px;width:12px;height:12px;background:#cf4b4b"></div><svg class="a" style="left:1104px;top:41px" width="12" height="12"><path d="M3.2,3.5 L8.8,8.8 M8.8,3.5 L3.2,8.8" stroke="#fff" stroke-width="1.5"/></svg><svg class="a" style="left:1086px;top:42px" width="12" height="11"><path d="M3.5,1.5 L8.5,1.5 L8.5,6.5 L3.5,6.5 Z" fill="#fff" stroke="#000" stroke-width="1.3"/><rect x="6" y="2" width="2.2" height="4.5" fill="#000"/><path d="M1.5,7 L10.5,7 M6,7 L6,10.5" stroke="#000" stroke-width="1.5"/></svg>

<div class="panel" style="top:57px"><div class="tri"></div><div class="t">Components</div><div class="a" style="left:261px;top:0;width:16px;height:15px;background:#fdfdfd"></div><div class="x"><svg class="a" style="left:1px;top:2px" width="9" height="9"><path d="M1.8,2.5 L6.8,7.5 M6.8,2.5 L1.8,7.5" stroke="#000" stroke-width="1.3"/></svg></div></div>
<div class="panel" style="top:76px"><div class="tri"></div><div class="t">Entity Info</div><div class="a" style="left:261px;top:0;width:16px;height:15px;background:#fdfdfd"></div><div class="x"><svg class="a" style="left:1px;top:2px" width="9" height="9"><path d="M1.8,2.5 L6.8,7.5 M6.8,2.5 L1.8,7.5" stroke="#000" stroke-width="1.3"/></svg></div></div>
<div class="panel" style="top:95px"><div class="tri"></div><div class="t">Materials</div><div class="a" style="left:261px;top:0;width:16px;height:15px;background:#fdfdfd"></div><div class="x"><svg class="a" style="left:1px;top:2px" width="9" height="9"><path d="M1.8,2.5 L6.8,7.5 M6.8,2.5 L1.8,7.5" stroke="#000" stroke-width="1.3"/></svg></div></div>
<div class="panel" style="top:114px"><div class="tri" style="left:7px;top:6px;border-left:3px solid transparent;border-right:3px solid transparent;border-top:6px solid #000;border-bottom:0"></div><div class="t">Layers</div><div class="a" style="left:261px;top:0;width:16px;height:15px;background:#fdfdfd"></div><div class="x"><svg class="a" style="left:1px;top:2px" width="9" height="9"><path d="M1.8,2.5 L6.8,7.5 M6.8,2.5 L1.8,7.5" stroke="#000" stroke-width="1.3"/></svg></div></div>

<svg class="a" style="left:841px;top:133px" width="277" height="24">
<circle cx="14.5" cy="11.8" r="6.6" fill="#fff" stroke="#111" stroke-width="1.6"/><path d="M10.5,11.8 L18.5,11.8 M14.5,7.8 L14.5,15.8" stroke="#111" stroke-width="2"/>
<circle cx="37.9" cy="11.8" r="6.6" fill="none" stroke="#999" stroke-width="1.2"/><path d="M33.9,11.8 L41.9,11.8" stroke="#999" stroke-width="1.6"/>
<path d="M262,10 L267,10 L267,5 L274,12 L267,19 L267,14 L262,14 Z" fill="#111"/><rect x="261.5" y="7.5" width="8" height="10" fill="#f4f2ea" stroke="#111" stroke-width="1"/><rect x="262" y="8" width="7" height="3" fill="#3a86e0"/><path d="M263,13 L268,13 M263,15.5 L268,15.5" stroke="#666" stroke-width="0.8"/></svg>
<div class="a" style="left:846px;top:162px;font-size:11px;line-height:13px">Name</div>
<div class="a" style="left:1035px;top:162px;font-size:11px;line-height:13px">Visible</div>
<div class="a" style="left:1085px;top:162px;font-size:11px;line-height:13px">Color</div>
<div class="a" style="left:1029px;top:159px;width:1px;height:16px;background:#8a8a8a"></div>
<div class="a" style="left:1079px;top:159px;width:1px;height:16px;background:#8a8a8a"></div>
<div class="a" style="left:841px;top:174px;width:277px;height:2px;background:#7a7a7a"></div>

<div class="row" style="top:178px"><div class="a" style="left:18px;top:0;width:259px;height:17px;background:#0078d7"></div><div class="a" style="left:206px;top:0;width:16px;height:17px;background:#fff"></div><div class="rad" style="background:radial-gradient(#000 0 3px,#fff 3.5px)"></div><div class="n" style="color:#fff">Layer0</div><div class="cb"><svg class=a style=left:0;top:0 width=9 height=10><path d='M1 5.2 L3.3 7.4 L7.6 2.3' fill=none stroke=#000 stroke-width=1.9/></svg></div><div class="sw" style="background:#f25252"></div></div>
<div class="row" style="top:195px"><div class="rad"></div><div class="n">Оси привязки</div><div class="cb"><svg class=a style=left:0;top:0 width=9 height=10><path d='M1 5.2 L3.3 7.4 L7.6 2.3' fill=none stroke=#000 stroke-width=1.9/></svg></div><div class="sw" style="background:#000000"></div></div>
<div class="row" style="top:212px"><div class="rad"></div><div class="n">Габаритная рамка</div><div class="cb"></div><div class="sw" style="background:#6a4300"></div></div>
<div class="row" style="top:229px"><div class="rad"></div><div class="n">Панели корпуса</div><div class="cb"><svg class=a style=left:0;top:0 width=9 height=10><path d='M1 5.2 L3.3 7.4 L7.6 2.3' fill=none stroke=#000 stroke-width=1.9/></svg></div><div class="sw" style="background:#00968a"></div></div>
<div class="row" style="top:246px"><div class="rad"></div><div class="n">Фурнитура</div><div class="cb"></div><div class="sw" style="background:#00968a"></div></div>
<div class="row" style="top:263px"><div class="rad"></div><div class="n">ХДФ</div><div class="cb"><svg class=a style=left:0;top:0 width=9 height=10><path d='M1 5.2 L3.3 7.4 L7.6 2.3' fill=none stroke=#000 stroke-width=1.9/></svg></div><div class="sw" style="background:#6a4300"></div></div>
<div class="row" style="top:280px"><div class="rad"></div><div class="n">Ручки</div><div class="cb"><svg class=a style=left:0;top:0 width=9 height=10><path d='M1 5.2 L3.3 7.4 L7.6 2.3' fill=none stroke=#000 stroke-width=1.9/></svg></div><div class="sw" style="background:#72b01e"></div></div>
<div class="row" style="top:297px"><div class="rad"></div><div class="n">Фасады</div><div class="cb"><svg class=a style=left:0;top:0 width=9 height=10><path d='M1 5.2 L3.3 7.4 L7.6 2.3' fill=none stroke=#000 stroke-width=1.9/></svg></div><div class="sw" style="background:#707070"></div></div>
<div class="row" style="top:314px"><div class="rad"></div><div class="n">Кнопки открывания</div><div class="cb"></div><div class="sw" style="background:#22ccff"></div></div>
<div class="row" style="top:331px"><div class="rad"></div><div class="n">Отображение торцов</div><div class="cb"><svg class=a style=left:0;top:0 width=9 height=10><path d='M1 5.2 L3.3 7.4 L7.6 2.3' fill=none stroke=#000 stroke-width=1.9/></svg></div><div class="sw" style="background:#6a4300"></div></div>
<div class="row" style="top:348px"><div class="rad"></div><div class="n">Отображение кромки</div><div class="cb"></div><div class="sw" style="background:#00968a"></div></div>

<div class="a" style="left:841px;top:439px;width:277px;height:5px;border:1px solid #b4b4b4;border-right:0;background:#fff"></div>
<div class="panel" style="top:445px"><div class="tri"></div><div class="t">Outliner</div><div class="a" style="left:261px;top:0;width:16px;height:15px;background:#fdfdfd"></div><div class="x"><svg class="a" style="left:1px;top:2px" width="9" height="9"><path d="M1.8,2.5 L6.8,7.5 M6.8,2.5 L1.8,7.5" stroke="#000" stroke-width="1.3"/></svg></div></div>
<div class="panel" style="top:464px"><div class="tri"></div><div class="t">Soften Edges</div><div class="a" style="left:261px;top:0;width:16px;height:15px;background:#fdfdfd"></div><div class="x"><svg class="a" style="left:1px;top:2px" width="9" height="9"><path d="M1.8,2.5 L6.8,7.5 M6.8,2.5 L1.8,7.5" stroke="#000" stroke-width="1.3"/></svg></div></div>
<div class="panel" style="top:483px"><div class="tri"></div><div class="t">Shadows</div><div class="a" style="left:261px;top:0;width:16px;height:15px;background:#fdfdfd"></div><div class="x"><svg class="a" style="left:1px;top:2px" width="9" height="9"><path d="M1.8,2.5 L6.8,7.5 M6.8,2.5 L1.8,7.5" stroke="#000" stroke-width="1.3"/></svg></div></div>
<div class="panel" style="top:502px"><div class="tri"></div><div class="t">Styles</div><div class="a" style="left:261px;top:0;width:16px;height:15px;background:#fdfdfd"></div><div class="x"><svg class="a" style="left:1px;top:2px" width="9" height="9"><path d="M1.8,2.5 L6.8,7.5 M6.8,2.5 L1.8,7.5" stroke="#000" stroke-width="1.3"/></svg></div></div>

</body></html>
